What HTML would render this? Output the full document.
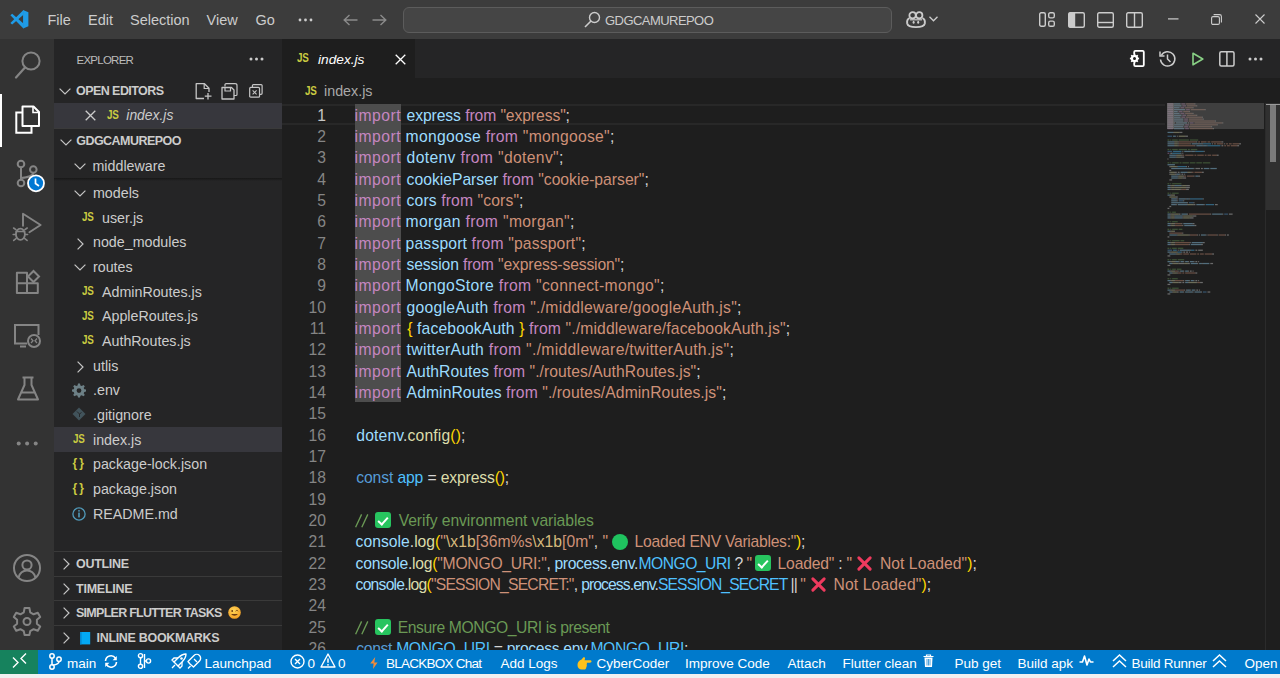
<!DOCTYPE html>
<html><head><meta charset="utf-8">
<style>
*{box-sizing:border-box;margin:0;padding:0}
html,body{width:1280px;height:678px;overflow:hidden;background:#1e1e1e;font-family:"Liberation Sans",sans-serif}
.a{position:absolute}
svg{position:absolute;overflow:visible}
#title{left:0;top:0;width:1280px;height:39px;background:#3c3c3c}
.menu{position:absolute;top:12px;font-size:14.5px;color:#cccccc;white-space:nowrap}
#act{left:0;top:39px;width:54px;height:611px;background:#333333}
#side{left:54px;top:39px;width:228px;height:611px;background:#252526}
#tabs{left:282px;top:39px;width:998px;height:39px;background:#252526}
#tab{left:282px;top:39px;width:133px;height:39px;background:#1e1e1e}
#status{left:0;top:649.5px;width:1280px;height:24.5px;background:#007acc}
#remote{left:0;top:649.5px;width:38px;height:24.5px;background:#16825d}
#taskbar{left:0;top:674px;width:1280px;height:4px;background:#f0f0f0}
.st{position:absolute;top:655.6px;font-size:13.5px;color:#ffffff;white-space:nowrap;line-height:16px}
.row{position:absolute;left:54px;width:228px;height:24.75px}
.tree{position:absolute;font-size:14.25px;color:#cccccc;white-space:nowrap;line-height:17px}
.hdr{position:absolute;font-size:12.5px;font-weight:bold;color:#cccccc;white-space:nowrap;line-height:14px}
.code{position:absolute;left:354.6px;font-size:15.7px;white-space:pre;line-height:21.333px;color:#d4d4d4}
.ln{position:absolute;left:290px;width:36px;text-align:right;font-size:15.7px;line-height:21.333px;color:#858585}
.js{position:absolute;font-size:12.5px;font-weight:bold;color:#cbcb41;line-height:12.5px;letter-spacing:-0.2px;white-space:nowrap;transform:scaleX(0.79);transform-origin:0 0}
.jb{position:absolute;font-size:12px;font-weight:bold;color:#cbcb41;line-height:12px;white-space:nowrap;letter-spacing:2.2px}
.ok{position:absolute;display:block;width:16px;height:16px;background:#27c45f;border-radius:3px}
.ok:after{content:"";position:absolute;left:5.5px;top:2.5px;width:4px;height:8px;border-right:2.2px solid #fff;border-bottom:2.2px solid #fff;transform:rotate(42deg)}
.gc{position:absolute;display:block;width:16px;height:16px;background:#1fc35f;border-radius:50%}
.rx{position:absolute;display:block;width:16px;height:16px}
.rx:before,.rx:after{content:"";position:absolute;left:6.5px;top:-1.5px;width:3px;height:19px;background:#ee3a5e;border-radius:1.5px;transform:rotate(45deg)}
.rx:after{transform:rotate(-45deg)}
.k{color:#c586c0}.v{color:#9cdcfe}.s{color:#ce9178}.f{color:#dcdcaa}.b{color:#ffd700}.c{color:#569cd6}.n{color:#4fc1ff}.cm{color:#6a9955}.e{color:#d7ba7d}
</style></head><body>
<div id="title" class="a"></div>

<!-- TITLE BAR -->
<svg style="left:9.8px;top:9.8px" width="18.4" height="18.4" viewBox="0 0 100 100"><g fill="#1f9ce8"><path d="M71 0 L100 12 V88 L71 100 Z"/><path d="M2 29 L12 21 L73 74 L73 100 Z"/><path d="M73 0 L73 26 L12 79 L2 71 Z"/></g></svg>
<div class="menu" style="left:47.5px">File</div>
<div class="menu" style="left:88px">Edit</div>
<div class="menu" style="left:130px">Selection</div>
<div class="menu" style="left:206.5px">View</div>
<div class="menu" style="left:255.5px">Go</div>
<svg style="left:298px;top:18px" width="16" height="4"><circle cx="2" cy="2" r="1.4" fill="#cccccc"/><circle cx="7.5" cy="2" r="1.4" fill="#cccccc"/><circle cx="13" cy="2" r="1.4" fill="#cccccc"/></svg>
<svg style="left:343px;top:14px" width="15" height="12" viewBox="0 0 15 12"><path d="M14.5 6 H1.5 M6.5 1 L1.2 6 L6.5 11" stroke="#8b8b8b" stroke-width="1.4" fill="none"/></svg>
<svg style="left:372px;top:14px" width="15" height="12" viewBox="0 0 15 12"><path d="M0.5 6 H13.5 M8.5 1 L13.8 6 L8.5 11" stroke="#8b8b8b" stroke-width="1.4" fill="none"/></svg>
<div class="a" style="left:403px;top:6.5px;width:489px;height:26.3px;background:#454545;border:1px solid #5c5c5c;border-radius:6px"></div>
<svg style="left:584px;top:11px" width="17" height="17" viewBox="0 0 17 17"><circle cx="10.5" cy="6.5" r="5" stroke="#cccccc" stroke-width="1.4" fill="none"/><path d="M7 10 L1 16" stroke="#cccccc" stroke-width="1.6"/></svg>
<div class="menu" style="left:605px;top:12.6px;font-size:13px;letter-spacing:-0.55px">GDGCAMUREPOO</div>
<svg style="left:906px;top:11px" width="20" height="17" viewBox="0 0 20 17"><circle cx="6.6" cy="4.3" r="3.2" stroke="#cccccc" stroke-width="1.8" fill="none"/><circle cx="13.2" cy="4.3" r="3.2" stroke="#cccccc" stroke-width="1.8" fill="none"/><path d="M3.6 7.2 C1.6 8 0.9 10.5 1.2 12.5 C1.8 15.3 5.5 16.1 10 16.1 C14.5 16.1 18.2 15.3 18.8 12.5 C19.1 10.5 18.4 8 16.4 7.2" stroke="#cccccc" stroke-width="1.9" fill="none"/><path d="M4 8.8 H16" stroke="#cccccc" stroke-width="1.2"/><ellipse cx="7.6" cy="11.3" rx="1" ry="1.5" fill="#cccccc"/><ellipse cx="12.2" cy="11.3" rx="1" ry="1.5" fill="#cccccc"/></svg>
<svg style="left:929px;top:16px" width="9" height="6" viewBox="0 0 9 6"><path d="M0.5 0.8 L4.5 4.8 L8.5 0.8" stroke="#cccccc" stroke-width="1.3" fill="none"/></svg>
<svg style="left:1039px;top:12px" width="16" height="15" viewBox="0 0 16 15"><rect x="0.7" y="0.7" width="5.6" height="13.6" rx="1.5" stroke="#cccccc" stroke-width="1.4" fill="none"/><rect x="9.7" y="0.7" width="5.6" height="5.2" rx="1.6" stroke="#cccccc" stroke-width="1.4" fill="none"/><rect x="9.7" y="9.1" width="5.6" height="5.2" rx="1.6" stroke="#cccccc" stroke-width="1.4" fill="none"/></svg>
<svg style="left:1067.5px;top:11.5px" width="17" height="16" viewBox="0 0 17 16"><rect x="0.7" y="0.7" width="15.6" height="14.6" rx="1.5" stroke="#cccccc" stroke-width="1.4" fill="none"/><rect x="0.7" y="0.7" width="6.5" height="14.6" fill="#cccccc"/></svg>
<svg style="left:1096.5px;top:11.5px" width="17" height="16" viewBox="0 0 17 16"><rect x="0.7" y="0.7" width="15.6" height="14.6" rx="1.5" stroke="#cccccc" stroke-width="1.4" fill="none"/><path d="M1 10.5 H16" stroke="#cccccc" stroke-width="1.4"/></svg>
<svg style="left:1125.5px;top:11.5px" width="17" height="16" viewBox="0 0 17 16"><rect x="0.7" y="0.7" width="15.6" height="14.6" rx="1.5" stroke="#cccccc" stroke-width="1.4" fill="none"/><path d="M8.5 1 V15" stroke="#cccccc" stroke-width="1.4"/></svg>
<svg style="left:1168px;top:17.5px" width="11" height="2"><rect x="0" y="0.3" width="10.5" height="1.2" fill="#cccccc"/></svg>
<svg style="left:1211px;top:14px" width="11" height="11" viewBox="0 0 11 11"><rect x="0.6" y="2.6" width="7.8" height="7.8" rx="1.4" stroke="#cccccc" stroke-width="1.1" fill="none"/><path d="M2.6 0.6 H8.5 C9.6 0.6 10.4 1.4 10.4 2.5 V8.4" stroke="#cccccc" stroke-width="1.1" fill="none"/></svg>
<svg style="left:1254.5px;top:14px" width="10" height="10" viewBox="0 0 10 10"><path d="M0.5 0.5 L9.5 9.5 M9.5 0.5 L0.5 9.5" stroke="#cccccc" stroke-width="1.1"/></svg>
<div id="act" class="a"></div>
<div id="side" class="a"></div>
<!-- ACTIVITY BAR -->
<svg style="left:14px;top:50px" width="28" height="30" viewBox="0 0 28 30"><circle cx="17" cy="11" r="8.6" stroke="#858585" stroke-width="2" fill="none"/><path d="M11 17.5 L2 27.5" stroke="#858585" stroke-width="2.2" stroke-linecap="round"/></svg>
<div class="a" style="left:0;top:93.5px;width:2px;height:53px;background:#ffffff"></div>
<svg style="left:14px;top:105px" width="28" height="30" viewBox="0 0 28 30"><path d="M8.5 7.5 H2.3 V27.8 H17.5 V21" stroke="#ffffff" stroke-width="2" fill="none"/><path d="M8.5 1.5 H19.5 L25 7 V21 H8.5 Z" stroke="#ffffff" stroke-width="2" fill="none" stroke-linejoin="round"/><path d="M19 1.5 V7.5 H25" stroke="#ffffff" stroke-width="1.6" fill="none"/></svg>
<svg style="left:14px;top:156px" width="34" height="36" viewBox="0 0 34 36"><circle cx="7" cy="8" r="3.3" stroke="#858585" stroke-width="2" fill="none"/><circle cx="19.3" cy="13.5" r="3.3" stroke="#858585" stroke-width="2" fill="none"/><circle cx="7" cy="27" r="3.3" stroke="#858585" stroke-width="2" fill="none"/><path d="M7 11.3 V23.7 M19.3 16.8 C19.3 20 15 21 7 22" stroke="#858585" stroke-width="2" fill="none"/><circle cx="22" cy="27.3" r="8" fill="#0078d4" stroke="#ffffff" stroke-width="1.8"/><path d="M21.5 22.5 V27.5 L25 30" stroke="#ffffff" stroke-width="1.7" fill="none"/></svg>
<svg style="left:8px;top:205px" width="40" height="40" viewBox="0 0 40 40"><path d="M15 20.8 V8.8 L32.6 20 L21.4 27.2" stroke="#858585" stroke-width="1.9" fill="none" stroke-linejoin="round" stroke-linecap="round"/><ellipse cx="12.4" cy="29.3" rx="4.5" ry="5.6" stroke="#858585" stroke-width="1.8" fill="none"/><path d="M8.2 26.5 H16.6 M7.9 24.6 L5.6 23 M7.7 29.5 H5.2 M8 33.6 L5.7 35.4 M16.9 24.6 L19.2 23 M17.1 29.5 H19.6 M16.8 33.6 L19.1 35.4" stroke="#858585" stroke-width="1.6" fill="none" stroke-linecap="round"/></svg>
<svg style="left:15px;top:268px" width="26" height="27" viewBox="0 0 26 27"><path d="M1.9 4.7 H12 V15.3 H22.8 V25.1 H1.9 Z M1.9 15.3 H12 V25.1" stroke="#858585" stroke-width="2" fill="none" stroke-linejoin="round"/><rect x="14.6" y="4.6" width="7.8" height="7.8" transform="rotate(45 18.5 8.5)" stroke="#858585" stroke-width="2" fill="none"/></svg>
<svg style="left:13px;top:323px" width="30" height="26" viewBox="0 0 30 26"><path d="M14 20.5 H2 V2 H25.5 V12" stroke="#858585" stroke-width="2" fill="none"/><path d="M7 23.5 H13" stroke="#858585" stroke-width="2"/><circle cx="21" cy="18" r="6" stroke="#858585" stroke-width="2" fill="none"/><path d="M18 15.5 L20 17.8 L18 20 M24 15.5 L22 17.8 L24 20" stroke="#858585" stroke-width="1.3" fill="none"/></svg>
<svg style="left:16px;top:376px" width="24" height="26" viewBox="0 0 24 26"><path d="M6.5 1.5 H17.5 M8.5 1.5 V9 L2 23.5 H22 L15.5 9 V1.5 M5 16.5 H19" stroke="#858585" stroke-width="2" fill="none" stroke-linejoin="round"/></svg>
<svg style="left:16px;top:441px" width="24" height="5"><circle cx="2.7" cy="2.5" r="2" fill="#858585"/><circle cx="11.1" cy="2.5" r="2" fill="#858585"/><circle cx="19.7" cy="2.5" r="2" fill="#858585"/></svg>
<svg style="left:12px;top:553px" width="30" height="30" viewBox="0 0 30 30"><circle cx="15" cy="15" r="13" stroke="#858585" stroke-width="2" fill="none"/><circle cx="15" cy="12" r="4.6" stroke="#858585" stroke-width="2" fill="none"/><path d="M6.5 24.5 C8 19.5 11 17.5 15 17.5 C19 17.5 22 19.5 23.5 24.5" stroke="#858585" stroke-width="2" fill="none"/></svg>
<svg style="left:12px;top:606px" width="30" height="30" viewBox="0 0 30 30"><path d="M12.6 2 H17.4 L18.2 6.3 L21.6 8.3 L25.8 6.8 L28.2 11 L24.9 13.8 V17.7 L28.2 20.5 L25.8 24.7 L21.6 23.2 L18.2 25.2 L17.4 29 H12.6 L11.8 25.2 L8.4 23.2 L4.2 24.7 L1.8 20.5 L5.1 17.7 V13.8 L1.8 11 L4.2 6.8 L8.4 8.3 L11.8 6.3 Z" stroke="#858585" stroke-width="2" fill="none" stroke-linejoin="round"/><circle cx="15" cy="15.5" r="3.5" stroke="#858585" stroke-width="2" fill="none"/></svg>


<!-- SIDEBAR -->
<div class="hdr" style="left:76.5px;top:52.8px;font-weight:normal;font-size:11.5px;letter-spacing:-0.75px;color:#bbbbbb">EXPLORER</div>
<svg style="left:249px;top:56.5px" width="16" height="4"><circle cx="2" cy="2" r="1.5" fill="#cccccc"/><circle cx="7.5" cy="2" r="1.5" fill="#cccccc"/><circle cx="13" cy="2" r="1.5" fill="#cccccc"/></svg>
<svg style="left:59px;top:88.2px" width="12" height="7" viewBox="0 0 12 7"><path d="M0.6 0.6 L6 6 L11.4 0.6" stroke="#c5c5c5" stroke-width="1.2" fill="none"/></svg>
<div class="hdr" style="left:76px;top:84.2px;letter-spacing:-0.56px">OPEN EDITORS</div>
<svg style="left:195px;top:82.5px" width="18" height="17" viewBox="0 0 18 17"><path d="M9 15.5 H1.2 V0.7 H9.5 L14 5.2 V9" stroke="#c5c5c5" stroke-width="1.3" fill="none" stroke-linejoin="round"/><path d="M9.2 0.7 V5.5 H14" stroke="#c5c5c5" stroke-width="1.2" fill="none"/><path d="M13 10 V16.5 M9.8 13.2 H16.5" stroke="#c5c5c5" stroke-width="1.3"/></svg>
<svg style="left:221px;top:82.5px" width="17" height="17" viewBox="0 0 17 17"><path d="M4 3.5 V1.5 C4 1 4.5 0.7 5 0.7 H14 C15 0.7 16 1.5 16 2.5 V11.5 C16 12 15.5 12.5 15 12.5 H13" stroke="#c5c5c5" stroke-width="1.2" fill="none"/><path d="M1 4.5 H10.5 L13 7 V16 H1 Z" stroke="#c5c5c5" stroke-width="1.3" fill="none" stroke-linejoin="round"/><path d="M4 4.5 V8 H9.5 V4.5" stroke="#c5c5c5" stroke-width="1.2" fill="none"/></svg>
<svg style="left:249.3px;top:83.8px" width="15" height="15" viewBox="0 0 16 16"><g transform="scale(0.92)"><path d="M4 3.5 V1.8 C4 1.2 4.5 0.7 5 0.7 H14 C14.6 0.7 15.2 1.2 15.2 1.8 V10.8 C15.2 11.4 14.7 12 14 12 H12.2" stroke="#c5c5c5" stroke-width="1.4" fill="none"/><rect x="0.8" y="4" width="11.4" height="11.3" rx="1.2" stroke="#c5c5c5" stroke-width="1.4" fill="none"/><path d="M4.2 7.5 L8.8 12.1 M8.8 7.5 L4.2 12.1" stroke="#c5c5c5" stroke-width="1.2"/></g></svg>
<div class="a" style="left:54px;top:102.7px;width:228px;height:25.4px;background:#37373d"></div>
<svg style="left:85px;top:109.9px" width="11" height="11" viewBox="0 0 11 11"><path d="M0.7 0.7 L10.3 10.3 M10.3 0.7 L0.7 10.3" stroke="#cccccc" stroke-width="1.3"/></svg>
<div class="js" style="left:106.7px;top:109.2px">JS</div>
<div class="tree" style="left:126.3px;top:106.90px;font-style:italic;color:#cccccc;font-size:13.9px">index.js</div>
<div class="a" style="left:54px;top:128px;width:228px;height:1px;background:#3a3a3a"></div>
<svg style="left:59.5px;top:138.5px" width="12" height="7" viewBox="0 0 12 7"><path d="M0.6 0.6 L6 6 L11.4 0.6" stroke="#c5c5c5" stroke-width="1.2" fill="none"/></svg>
<div class="hdr" style="left:76.3px;top:133.7px;letter-spacing:-0.55px">GDGCAMUREPOO</div>
<svg style="left:74px;top:163px" width="12" height="7" viewBox="0 0 12 7"><path d="M0.6 0.6 L6 6 L11.4 0.6" stroke="#c5c5c5" stroke-width="1.2" fill="none"/></svg>
<div class="tree" style="left:92.5px;top:158.10px;color:#cccccc">middleware</div>
<svg style="left:74px;top:190.3px" width="12" height="7" viewBox="0 0 12 7"><path d="M0.6 0.6 L6 6 L11.4 0.6" stroke="#c5c5c5" stroke-width="1.2" fill="none"/></svg>
<div class="tree" style="left:93px;top:185.10px;color:#cccccc">models</div>
<div class="js" style="left:81.5px;top:211.12px">JS</div>
<div class="tree" style="left:102px;top:209.75px;color:#cccccc">user.js</div>
<svg style="left:77px;top:237.60000000000002px" width="7" height="12" viewBox="0 0 7 12"><path d="M0.6 0.6 L6 6 L0.6 11.4" stroke="#c5c5c5" stroke-width="1.2" fill="none"/></svg>
<div class="tree" style="left:93px;top:234.40px;color:#cccccc">node_modules</div>
<svg style="left:74px;top:264.25px" width="12" height="7" viewBox="0 0 12 7"><path d="M0.6 0.6 L6 6 L11.4 0.6" stroke="#c5c5c5" stroke-width="1.2" fill="none"/></svg>
<div class="tree" style="left:93px;top:259.05px;color:#cccccc">routes</div>
<div class="js" style="left:81.5px;top:285.07px">JS</div>
<div class="tree" style="left:102px;top:283.70px;color:#cccccc">AdminRoutes.js</div>
<div class="js" style="left:81.5px;top:309.72px">JS</div>
<div class="tree" style="left:102px;top:308.35px;color:#cccccc">AppleRoutes.js</div>
<div class="js" style="left:81.5px;top:334.37px">JS</div>
<div class="tree" style="left:102px;top:333.00px;color:#cccccc">AuthRoutes.js</div>
<svg style="left:77px;top:360.85px" width="7" height="12" viewBox="0 0 7 12"><path d="M0.6 0.6 L6 6 L0.6 11.4" stroke="#c5c5c5" stroke-width="1.2" fill="none"/></svg>
<div class="tree" style="left:93px;top:357.65px;color:#cccccc">utlis</div>
<svg style="left:72px;top:382.50px" width="14" height="14" viewBox="0 0 14 14"><path fill="#6d8086" d="M6 0.5 H8 L8.4 2.4 L9.8 3 L11.4 1.9 L12.8 3.3 L11.7 4.9 L12.3 6.3 L14 6.6 V8.6 L12.3 8.9 L11.7 10.3 L12.8 11.9 L11.4 13.3 L9.8 12.2 L8.4 12.8 L8 14.5 H6 L5.6 12.8 L4.2 12.2 L2.6 13.3 L1.2 11.9 L2.3 10.3 L1.7 8.9 L0 8.6 V6.6 L1.7 6.3 L2.3 4.9 L1.2 3.3 L2.6 1.9 L4.2 3 L5.6 2.4 Z M7 5.2 A2.4 2.4 0 1 0 7 10 A2.4 2.4 0 1 0 7 5.2 Z"/></svg>
<div class="tree" style="left:93px;top:382.30px;color:#cccccc">.env</div>
<svg style="left:72px;top:407.15px" width="14" height="14" viewBox="0 0 14 14"><path fill="#41535b" d="M7 0.5 L13.5 7 L7 13.5 L0.5 7 Z"/><path d="M5 4.5 L7.5 7 V10 M7.5 7 L9.5 5.5" stroke="#252526" stroke-width="0.9" fill="none"/></svg>
<div class="tree" style="left:93px;top:406.95px;color:#cccccc">.gitignore</div>
<div class="a" style="left:54px;top:427.10px;width:228px;height:24.8px;background:#37373d"></div>
<div class="js" style="left:72.5px;top:432.97px">JS</div>
<div class="tree" style="left:93px;top:431.60px;color:#cccccc">index.js</div>
<div class="jb" style="left:72.5px;top:457.3px">{}</div>
<div class="tree" style="left:93px;top:456.25px;color:#cccccc">package-lock.json</div>
<div class="jb" style="left:72.5px;top:481.95px">{}</div>
<div class="tree" style="left:93px;top:480.90px;color:#cccccc">package.json</div>
<svg style="left:72px;top:506.75px" width="14" height="14" viewBox="0 0 14 14"><circle cx="7" cy="7" r="6.1" stroke="#519aba" stroke-width="1.3" fill="none"/><rect x="6.2" y="5.6" width="1.6" height="4.8" fill="#519aba"/><circle cx="7" cy="3.8" r="0.9" fill="#519aba"/></svg>
<div class="tree" style="left:93px;top:505.55px;color:#cccccc">README.md</div>
<div class="a" style="left:54px;top:551px;width:228px;height:1px;background:#3a3a3a"></div>
<svg style="left:62.5px;top:558px" width="7" height="12" viewBox="0 0 7 12"><path d="M0.6 0.6 L6 6 L0.6 11.4" stroke="#c5c5c5" stroke-width="1.2" fill="none"/></svg>
<div class="hdr" style="left:76px;top:557.1px;letter-spacing:-0.3px">OUTLINE</div>
<div class="a" style="left:54px;top:575.6px;width:228px;height:1px;background:#3a3a3a"></div>
<svg style="left:62.5px;top:582.6px" width="7" height="12" viewBox="0 0 7 12"><path d="M0.6 0.6 L6 6 L0.6 11.4" stroke="#c5c5c5" stroke-width="1.2" fill="none"/></svg>
<div class="hdr" style="left:76px;top:581.7px;letter-spacing:-0.24px">TIMELINE</div>
<div class="a" style="left:54px;top:600.3px;width:228px;height:1px;background:#3a3a3a"></div>
<svg style="left:62.5px;top:607.3px" width="7" height="12" viewBox="0 0 7 12"><path d="M0.6 0.6 L6 6 L0.6 11.4" stroke="#c5c5c5" stroke-width="1.2" fill="none"/></svg>
<div class="hdr" style="left:76px;top:606.4px;letter-spacing:-0.73px">SIMPLER FLUTTER TASKS</div>
<div class="a" style="left:54px;top:625px;width:228px;height:1px;background:#3a3a3a"></div>
<svg style="left:62.5px;top:632px" width="7" height="12" viewBox="0 0 7 12"><path d="M0.6 0.6 L6 6 L0.6 11.4" stroke="#c5c5c5" stroke-width="1.2" fill="none"/></svg>
<div class="hdr" style="left:96.5px;top:631px;letter-spacing:-0.31px">INLINE BOOKMARKS</div>
<div class="a" style="left:54px;top:177.5px;width:228px;height:3px;background:linear-gradient(#171717,rgba(23,23,23,0))"></div>
<svg style="left:228px;top:606px" width="13" height="13" viewBox="0 0 13 13"><defs><radialGradient id="wg" cx="0.45" cy="0.35" r="0.7"><stop offset="0" stop-color="#ffd75a"/><stop offset="1" stop-color="#f29a1e"/></radialGradient></defs><circle cx="6.5" cy="6.5" r="6.3" fill="url(#wg)"/><ellipse cx="4.2" cy="5" rx="0.9" ry="1.1" fill="#6b3b12"/><path d="M7.6 5.2 C8.3 4.2 9.5 4.2 10.2 5.2" stroke="#6b3b12" stroke-width="0.9" fill="none"/><path d="M3.2 8 C4.5 10.3 8.5 10.3 9.8 8 Z" fill="#6b3b12"/></svg>
<svg style="left:80px;top:631.8px" width="11" height="13" viewBox="0 0 11 13"><rect x="0" y="0" width="10.2" height="12.4" fill="#03a9f4"/><rect x="0" y="0" width="1.6" height="12.4" fill="#0288d1"/></svg>
<div id="tabs" class="a"></div>
<div id="tab" class="a"></div>

<!-- EDITOR -->
<div class="js" style="left:297.3px;top:51.9px">JS</div>
<div class="tree" style="left:318px;top:51.30px;font-style:italic;color:#ffffff;font-size:13.7px">index.js</div>
<svg style="left:394.5px;top:53.5px" width="11" height="11" viewBox="0 0 11 11"><path d="M0.7 0.7 L10.3 10.3 M10.3 0.7 L0.7 10.3" stroke="#ffffff" stroke-width="1.3"/></svg>
<svg style="left:1130px;top:50px" width="15" height="17" viewBox="0 0 15 17"><rect x="4.2" y="0.9" width="9.6" height="15.2" rx="1.2" stroke="#ffffff" stroke-width="1.8" fill="none"/><circle cx="4.5" cy="8.5" r="4.2" fill="#1e1e1e"/><path fill="#ffffff" d="M3.7 4.8 H5.3 L5.5 5.9 L6.4 6.3 L7.3 5.7 L8.3 6.7 L7.7 7.6 L8.1 8.5 L9.1 8.7 V10.3 L8.1 10.5 L7.7 11.4 L8.3 12.3 L7.3 13.3 L6.4 12.7 L5.5 13.1 L5.3 14.2 H3.7 L3.5 13.1 L2.6 12.7 L1.7 13.3 L0.7 12.3 L1.3 11.4 L0.9 10.5 L-0.1 10.3 V8.7 L0.9 8.5 L1.3 7.6 L0.7 6.7 L1.7 5.7 L2.6 6.3 L3.5 5.9 Z M4.5 8 A1.5 1.5 0 1 0 4.5 11 A1.5 1.5 0 1 0 4.5 8 Z" transform="translate(0,-1)"/></svg>
<svg style="left:1158.5px;top:50px" width="17" height="17" viewBox="0 0 17 17"><path d="M2.3 5.5 A7.2 7.2 0 1 1 1.5 9.5" stroke="#cccccc" stroke-width="1.5" fill="none"/><path d="M1 1.5 V6 H5.5" stroke="#cccccc" stroke-width="1.5" fill="none"/><path d="M8.5 4.5 V9 L11.5 12" stroke="#cccccc" stroke-width="1.5" fill="none"/></svg>
<svg style="left:1191.5px;top:52px" width="12" height="14" viewBox="0 0 12 14"><path d="M1 1.2 L10.8 7 L1 12.8 Z" stroke="#89d185" stroke-width="1.6" fill="none" stroke-linejoin="round"/></svg>
<svg style="left:1218.5px;top:50.5px" width="16" height="16" viewBox="0 0 16 16"><rect x="0.8" y="0.8" width="14.2" height="14.2" rx="1.5" stroke="#cccccc" stroke-width="1.5" fill="none"/><path d="M7.9 1 V15" stroke="#cccccc" stroke-width="1.5"/></svg>
<svg style="left:1247.5px;top:56.5px" width="16" height="4"><circle cx="2" cy="2" r="1.5" fill="#cccccc"/><circle cx="7.5" cy="2" r="1.5" fill="#cccccc"/><circle cx="13" cy="2" r="1.5" fill="#cccccc"/></svg>
<div class="js" style="left:304.6px;top:85px">JS</div>
<div class="tree" style="left:324px;top:83.00px;color:#a9a9a9;font-size:14.3px">index.js</div>
<div class="a" style="left:282px;top:103.5px;width:883px;height:21.4px;border-top:2px solid #282828;border-bottom:2px solid #282828"></div>
<div class="a" style="left:355px;top:103.5px;width:46.3px;height:298.3px;background:#4d4d4d"></div>
<div class="ln" style="top:104.600px;color:#c6c6c6">1</div>
<!--CODE-->
<div class="code" style="left:354.60px;top:104.600px;letter-spacing:0.475px"><span class="k">import</span></div>
<div class="code" style="left:406.60px;top:104.600px;letter-spacing:-0.095px"><span class="v">express</span> <span class="k">from</span> <span class="s">&quot;express&quot;</span>;</div>
<div class="code" style="left:354.60px;top:125.933px;letter-spacing:0.475px"><span class="k">import</span></div>
<div class="code" style="left:405.60px;top:125.933px;letter-spacing:0.273px"><span class="v">mongoose</span> <span class="k">from</span> <span class="s">&quot;mongoose&quot;</span>;</div>
<div class="code" style="left:354.60px;top:147.266px;letter-spacing:0.475px"><span class="k">import</span></div>
<div class="code" style="left:406.60px;top:147.266px;letter-spacing:0.348px"><span class="v">dotenv</span> <span class="k">from</span> <span class="s">&quot;dotenv&quot;</span>;</div>
<div class="code" style="left:354.60px;top:168.599px;letter-spacing:0.475px"><span class="k">import</span></div>
<div class="code" style="left:406.60px;top:168.599px;letter-spacing:-0.001px"><span class="v">cookieParser</span> <span class="k">from</span> <span class="s">&quot;cookie-parser&quot;</span>;</div>
<div class="code" style="left:354.60px;top:189.932px;letter-spacing:0.475px"><span class="k">import</span></div>
<div class="code" style="left:406.60px;top:189.932px;letter-spacing:0.125px"><span class="v">cors</span> <span class="k">from</span> <span class="s">&quot;cors&quot;</span>;</div>
<div class="code" style="left:354.60px;top:211.265px;letter-spacing:0.475px"><span class="k">import</span></div>
<div class="code" style="left:405.60px;top:211.265px;letter-spacing:0.339px"><span class="v">morgan</span> <span class="k">from</span> <span class="s">&quot;morgan&quot;</span>;</div>
<div class="code" style="left:354.60px;top:232.598px;letter-spacing:0.475px"><span class="k">import</span></div>
<div class="code" style="left:405.60px;top:232.598px;letter-spacing:0.164px"><span class="v">passport</span> <span class="k">from</span> <span class="s">&quot;passport&quot;</span>;</div>
<div class="code" style="left:354.60px;top:253.931px;letter-spacing:0.475px"><span class="k">import</span></div>
<div class="code" style="left:406.60px;top:253.931px;letter-spacing:-0.145px"><span class="v">session</span> <span class="k">from</span> <span class="s">&quot;express-session&quot;</span>;</div>
<div class="code" style="left:354.60px;top:275.264px;letter-spacing:0.475px"><span class="k">import</span></div>
<div class="code" style="left:405.60px;top:275.264px;letter-spacing:0.306px"><span class="v">MongoStore</span> <span class="k">from</span> <span class="s">&quot;connect-mongo&quot;</span>;</div>
<div class="code" style="left:354.60px;top:296.597px;letter-spacing:0.475px"><span class="k">import</span></div>
<div class="code" style="left:406.60px;top:296.597px;letter-spacing:0.260px"><span class="v">googleAuth</span> <span class="k">from</span> <span class="s">&quot;./middleware/googleAuth.js&quot;</span>;</div>
<div class="code" style="left:354.60px;top:317.930px;letter-spacing:0.475px"><span class="k">import</span></div>
<div class="code" style="left:407.20px;top:317.930px;letter-spacing:0.137px"><span class="b">{</span> <span class="v">facebookAuth</span> <span class="b">}</span> <span class="k">from</span> <span class="s">&quot;./middleware/facebookAuth.js&quot;</span>;</div>
<div class="code" style="left:354.60px;top:339.263px;letter-spacing:0.475px"><span class="k">import</span></div>
<div class="code" style="left:406.60px;top:339.263px;letter-spacing:0.312px"><span class="v">twitterAuth</span> <span class="k">from</span> <span class="s">&quot;./middleware/twitterAuth.js&quot;</span>;</div>
<div class="code" style="left:354.60px;top:360.596px;letter-spacing:0.475px"><span class="k">import</span></div>
<div class="code" style="left:406.60px;top:360.596px;letter-spacing:0.051px"><span class="v">AuthRoutes</span> <span class="k">from</span> <span class="s">&quot;./routes/AuthRoutes.js&quot;</span>;</div>
<div class="code" style="left:354.60px;top:381.929px;letter-spacing:0.475px"><span class="k">import</span></div>
<div class="code" style="left:406.60px;top:381.929px;letter-spacing:0.080px"><span class="v">AdminRoutes</span> <span class="k">from</span> <span class="s">&quot;./routes/AdminRoutes.js&quot;</span>;</div>
<div class="code" style="left:356.30px;top:424.595px;letter-spacing:0.140px"><span class="v">dotenv</span>.<span class="f">config</span><span class="b">()</span>;</div>
<div class="code" style="left:356.30px;top:467.261px;letter-spacing:-0.133px"><span class="c">const</span> <span class="n">app</span> = <span class="f">express</span><span class="b">()</span>;</div>
<svg style="left:354px;top:513.43px" width="16" height="15" viewBox="0 0 16 15"><path d="M1.6 14.2 L7.6 1.4 M7.8 14.2 L13.8 1.4" stroke="#6a9955" stroke-width="1.35" fill="none"/></svg>
<i class="ok" style="left:374.8px;top:512.43px"></i>
<div class="code" style="left:398.70px;top:509.927px;letter-spacing:-0.071px"><span class="cm">Verify environment variables</span></div>
<div class="code" style="left:355.60px;top:531.260px;letter-spacing:0.010px"><span class="v">console</span>.<span class="f">log</span><span class="b">(</span><span class="s">&quot;</span><span class="e">\x1b</span><span class="s">[36m%s</span><span class="e">\x1b</span><span class="s">[0m&quot;</span>, <span class="s">&quot;</span></div>
<i class="gc" style="left:612.2px;top:533.76px"></i>
<div class="code" style="left:634.60px;top:531.260px;letter-spacing:-0.274px"><span class="s">Loaded ENV Variables:&quot;</span><span class="b">)</span>;</div>
<div class="code" style="left:355.60px;top:552.593px;letter-spacing:-0.247px"><span class="v">console</span>.<span class="f">log</span><span class="b">(</span><span class="s">&quot;MONGO_URI:&quot;</span>,</div>
<div class="code" style="left:554.40px;top:552.593px;letter-spacing:-0.347px"><span class="v">process</span>.<span class="v">env</span>.</div>
<div class="code" style="left:638.40px;top:552.593px;letter-spacing:-0.507px"><span class="n">MONGO_URI</span> ? <span class="s">&quot;</span></div>
<i class="ok" style="left:754.7px;top:555.09px"></i>
<div class="code" style="left:777.60px;top:552.593px;letter-spacing:-0.209px"><span class="s">Loaded&quot;</span> : <span class="s">&quot;</span></div>
<i class="rx" style="left:856.8px;top:555.09px"></i>
<div class="code" style="left:879.90px;top:552.593px;letter-spacing:0.049px"><span class="s">Not Loaded&quot;</span><span class="b">)</span>;</div>
<div class="code" style="left:355.60px;top:573.926px;letter-spacing:-0.774px"><span class="v">console</span>.<span class="f">log</span><span class="b">(</span><span class="s">&quot;SESSION_SECRET:&quot;</span>,</div>
<div class="code" style="left:581.20px;top:573.926px;letter-spacing:-0.915px"><span class="v">process</span>.<span class="v">env</span>.<span class="n">SESSION_SECRET</span> || <span class="s">&quot;</span></div>
<i class="rx" style="left:810.9px;top:576.43px"></i>
<div class="code" style="left:833.50px;top:573.926px;letter-spacing:0.116px"><span class="s">Not Loaded&quot;</span><span class="b">)</span>;</div>
<svg style="left:354px;top:620.09px" width="16" height="15" viewBox="0 0 16 15"><path d="M1.6 14.2 L7.6 1.4 M7.8 14.2 L13.8 1.4" stroke="#6a9955" stroke-width="1.35" fill="none"/></svg>
<i class="ok" style="left:374.8px;top:619.09px"></i>
<div class="code" style="left:397.70px;top:616.592px;letter-spacing:-0.420px"><span class="cm">Ensure MONGO_URI is present</span></div>
<div class="code" style="left:356.30px;top:637.925px;letter-spacing:-0.341px"><span class="c">const</span> <span class="n">MONGO_URI</span> = <span class="v">process</span>.<span class="v">env</span>.<span class="n">MONGO_URI</span>;</div>
<!--/CODE-->
<div class="ln" style="top:125.933px;color:#858585">2</div>
<div class="ln" style="top:147.266px;color:#858585">3</div>
<div class="ln" style="top:168.599px;color:#858585">4</div>
<div class="ln" style="top:189.932px;color:#858585">5</div>
<div class="ln" style="top:211.265px;color:#858585">6</div>
<div class="ln" style="top:232.598px;color:#858585">7</div>
<div class="ln" style="top:253.931px;color:#858585">8</div>
<div class="ln" style="top:275.264px;color:#858585">9</div>
<div class="ln" style="top:296.597px;color:#858585">10</div>
<div class="ln" style="top:317.930px;color:#858585">11</div>
<div class="ln" style="top:339.263px;color:#858585">12</div>
<div class="ln" style="top:360.596px;color:#858585">13</div>
<div class="ln" style="top:381.929px;color:#858585">14</div>
<div class="ln" style="top:403.262px;color:#858585">15</div>
<div class="ln" style="top:424.595px;color:#858585">16</div>
<div class="ln" style="top:445.928px;color:#858585">17</div>
<div class="ln" style="top:467.261px;color:#858585">18</div>
<div class="ln" style="top:488.594px;color:#858585">19</div>
<div class="ln" style="top:509.927px;color:#858585">20</div>
<div class="ln" style="top:531.260px;color:#858585">21</div>
<div class="ln" style="top:552.593px;color:#858585">22</div>
<div class="ln" style="top:573.926px;color:#858585">23</div>
<div class="ln" style="top:595.259px;color:#858585">24</div>
<div class="ln" style="top:616.592px;color:#858585">25</div>
<div class="ln" style="top:637.925px;color:#858585">26</div>

<!-- MINIMAP -->
<!--MINI--><svg style="left:0;top:0" width="1280" height="678"><rect x="1167.50" y="103.30" width="5.58" height="1.25" fill="#c586c0" fill-opacity="0.42"/><rect x="1174.01" y="103.30" width="6.51" height="1.25" fill="#9cdcfe" fill-opacity="0.42"/><rect x="1181.45" y="103.30" width="3.72" height="1.25" fill="#c586c0" fill-opacity="0.42"/><rect x="1186.10" y="103.30" width="8.37" height="1.25" fill="#ce9178" fill-opacity="0.42"/><rect x="1194.47" y="103.30" width="0.93" height="1.25" fill="#d4d4d4" fill-opacity="0.42"/><rect x="1167.50" y="105.20" width="5.58" height="1.25" fill="#c586c0" fill-opacity="0.42"/><rect x="1174.01" y="105.20" width="7.44" height="1.25" fill="#9cdcfe" fill-opacity="0.42"/><rect x="1182.38" y="105.20" width="3.72" height="1.25" fill="#c586c0" fill-opacity="0.42"/><rect x="1187.03" y="105.20" width="9.30" height="1.25" fill="#ce9178" fill-opacity="0.42"/><rect x="1196.33" y="105.20" width="0.93" height="1.25" fill="#d4d4d4" fill-opacity="0.42"/><rect x="1167.50" y="107.10" width="5.58" height="1.25" fill="#c586c0" fill-opacity="0.42"/><rect x="1174.01" y="107.10" width="5.58" height="1.25" fill="#9cdcfe" fill-opacity="0.42"/><rect x="1180.52" y="107.10" width="3.72" height="1.25" fill="#c586c0" fill-opacity="0.42"/><rect x="1185.17" y="107.10" width="7.44" height="1.25" fill="#ce9178" fill-opacity="0.42"/><rect x="1192.61" y="107.10" width="0.93" height="1.25" fill="#d4d4d4" fill-opacity="0.42"/><rect x="1167.50" y="109.00" width="5.58" height="1.25" fill="#c586c0" fill-opacity="0.42"/><rect x="1174.01" y="109.00" width="11.16" height="1.25" fill="#9cdcfe" fill-opacity="0.42"/><rect x="1186.10" y="109.00" width="3.72" height="1.25" fill="#c586c0" fill-opacity="0.42"/><rect x="1190.75" y="109.00" width="13.95" height="1.25" fill="#ce9178" fill-opacity="0.42"/><rect x="1204.70" y="109.00" width="0.93" height="1.25" fill="#d4d4d4" fill-opacity="0.42"/><rect x="1167.50" y="110.90" width="5.58" height="1.25" fill="#c586c0" fill-opacity="0.42"/><rect x="1174.01" y="110.90" width="3.72" height="1.25" fill="#9cdcfe" fill-opacity="0.42"/><rect x="1178.66" y="110.90" width="3.72" height="1.25" fill="#c586c0" fill-opacity="0.42"/><rect x="1183.31" y="110.90" width="5.58" height="1.25" fill="#ce9178" fill-opacity="0.42"/><rect x="1188.89" y="110.90" width="0.93" height="1.25" fill="#d4d4d4" fill-opacity="0.42"/><rect x="1167.50" y="112.80" width="5.58" height="1.25" fill="#c586c0" fill-opacity="0.42"/><rect x="1174.01" y="112.80" width="5.58" height="1.25" fill="#9cdcfe" fill-opacity="0.42"/><rect x="1180.52" y="112.80" width="3.72" height="1.25" fill="#c586c0" fill-opacity="0.42"/><rect x="1185.17" y="112.80" width="7.44" height="1.25" fill="#ce9178" fill-opacity="0.42"/><rect x="1192.61" y="112.80" width="0.93" height="1.25" fill="#d4d4d4" fill-opacity="0.42"/><rect x="1167.50" y="114.70" width="5.58" height="1.25" fill="#c586c0" fill-opacity="0.42"/><rect x="1174.01" y="114.70" width="7.44" height="1.25" fill="#9cdcfe" fill-opacity="0.42"/><rect x="1182.38" y="114.70" width="3.72" height="1.25" fill="#c586c0" fill-opacity="0.42"/><rect x="1187.03" y="114.70" width="9.30" height="1.25" fill="#ce9178" fill-opacity="0.42"/><rect x="1196.33" y="114.70" width="0.93" height="1.25" fill="#d4d4d4" fill-opacity="0.42"/><rect x="1167.50" y="116.60" width="5.58" height="1.25" fill="#c586c0" fill-opacity="0.42"/><rect x="1174.01" y="116.60" width="6.51" height="1.25" fill="#9cdcfe" fill-opacity="0.42"/><rect x="1181.45" y="116.60" width="3.72" height="1.25" fill="#c586c0" fill-opacity="0.42"/><rect x="1186.10" y="116.60" width="15.81" height="1.25" fill="#ce9178" fill-opacity="0.42"/><rect x="1201.91" y="116.60" width="0.93" height="1.25" fill="#d4d4d4" fill-opacity="0.42"/><rect x="1167.50" y="118.50" width="5.58" height="1.25" fill="#c586c0" fill-opacity="0.42"/><rect x="1174.01" y="118.50" width="9.30" height="1.25" fill="#9cdcfe" fill-opacity="0.42"/><rect x="1184.24" y="118.50" width="3.72" height="1.25" fill="#c586c0" fill-opacity="0.42"/><rect x="1188.89" y="118.50" width="13.95" height="1.25" fill="#ce9178" fill-opacity="0.42"/><rect x="1202.84" y="118.50" width="0.93" height="1.25" fill="#d4d4d4" fill-opacity="0.42"/><rect x="1167.50" y="120.40" width="5.58" height="1.25" fill="#c586c0" fill-opacity="0.42"/><rect x="1174.01" y="120.40" width="9.30" height="1.25" fill="#9cdcfe" fill-opacity="0.42"/><rect x="1184.24" y="120.40" width="3.72" height="1.25" fill="#c586c0" fill-opacity="0.42"/><rect x="1188.89" y="120.40" width="26.04" height="1.25" fill="#ce9178" fill-opacity="0.42"/><rect x="1214.93" y="120.40" width="0.93" height="1.25" fill="#d4d4d4" fill-opacity="0.42"/><rect x="1167.50" y="122.30" width="5.58" height="1.25" fill="#c586c0" fill-opacity="0.42"/><rect x="1174.01" y="122.30" width="0.93" height="1.25" fill="#d4d4d4" fill-opacity="0.42"/><rect x="1175.87" y="122.30" width="11.16" height="1.25" fill="#9cdcfe" fill-opacity="0.42"/><rect x="1187.96" y="122.30" width="0.93" height="1.25" fill="#d4d4d4" fill-opacity="0.42"/><rect x="1189.82" y="122.30" width="3.72" height="1.25" fill="#c586c0" fill-opacity="0.42"/><rect x="1194.47" y="122.30" width="27.90" height="1.25" fill="#ce9178" fill-opacity="0.42"/><rect x="1222.37" y="122.30" width="0.93" height="1.25" fill="#d4d4d4" fill-opacity="0.42"/><rect x="1167.50" y="124.20" width="5.58" height="1.25" fill="#c586c0" fill-opacity="0.42"/><rect x="1174.01" y="124.20" width="10.23" height="1.25" fill="#9cdcfe" fill-opacity="0.42"/><rect x="1185.17" y="124.20" width="3.72" height="1.25" fill="#c586c0" fill-opacity="0.42"/><rect x="1189.82" y="124.20" width="26.97" height="1.25" fill="#ce9178" fill-opacity="0.42"/><rect x="1216.79" y="124.20" width="0.93" height="1.25" fill="#d4d4d4" fill-opacity="0.42"/><rect x="1167.50" y="126.10" width="5.58" height="1.25" fill="#c586c0" fill-opacity="0.42"/><rect x="1174.01" y="126.10" width="9.30" height="1.25" fill="#9cdcfe" fill-opacity="0.42"/><rect x="1184.24" y="126.10" width="3.72" height="1.25" fill="#c586c0" fill-opacity="0.42"/><rect x="1188.89" y="126.10" width="22.32" height="1.25" fill="#ce9178" fill-opacity="0.42"/><rect x="1211.21" y="126.10" width="0.93" height="1.25" fill="#d4d4d4" fill-opacity="0.42"/><rect x="1167.50" y="128.00" width="5.58" height="1.25" fill="#c586c0" fill-opacity="0.42"/><rect x="1174.01" y="128.00" width="10.23" height="1.25" fill="#9cdcfe" fill-opacity="0.42"/><rect x="1185.17" y="128.00" width="3.72" height="1.25" fill="#c586c0" fill-opacity="0.42"/><rect x="1189.82" y="128.00" width="23.25" height="1.25" fill="#ce9178" fill-opacity="0.42"/><rect x="1213.07" y="128.00" width="0.93" height="1.25" fill="#d4d4d4" fill-opacity="0.42"/><rect x="1167.50" y="131.80" width="5.58" height="1.25" fill="#9cdcfe" fill-opacity="0.42"/><rect x="1173.08" y="131.80" width="0.93" height="1.25" fill="#d4d4d4" fill-opacity="0.42"/><rect x="1174.01" y="131.80" width="5.58" height="1.25" fill="#dcdcaa" fill-opacity="0.42"/><rect x="1179.59" y="131.80" width="2.79" height="1.25" fill="#d4d4d4" fill-opacity="0.42"/><rect x="1167.50" y="135.60" width="4.65" height="1.25" fill="#569cd6" fill-opacity="0.42"/><rect x="1173.08" y="135.60" width="2.79" height="1.25" fill="#9cdcfe" fill-opacity="0.42"/><rect x="1176.80" y="135.60" width="0.93" height="1.25" fill="#d4d4d4" fill-opacity="0.42"/><rect x="1178.66" y="135.60" width="6.51" height="1.25" fill="#dcdcaa" fill-opacity="0.42"/><rect x="1185.17" y="135.60" width="2.79" height="1.25" fill="#d4d4d4" fill-opacity="0.42"/><rect x="1167.50" y="139.40" width="1.86" height="1.25" fill="#6a9955" fill-opacity="0.42"/><rect x="1170.29" y="139.40" width="0.93" height="1.25" fill="#6a9955" fill-opacity="0.42"/><rect x="1172.15" y="139.40" width="5.58" height="1.25" fill="#6a9955" fill-opacity="0.42"/><rect x="1178.66" y="139.40" width="10.23" height="1.25" fill="#6a9955" fill-opacity="0.42"/><rect x="1189.82" y="139.40" width="8.37" height="1.25" fill="#6a9955" fill-opacity="0.42"/><rect x="1167.50" y="141.30" width="6.51" height="1.25" fill="#9cdcfe" fill-opacity="0.42"/><rect x="1174.01" y="141.30" width="0.93" height="1.25" fill="#d4d4d4" fill-opacity="0.42"/><rect x="1174.94" y="141.30" width="2.79" height="1.25" fill="#dcdcaa" fill-opacity="0.42"/><rect x="1177.73" y="141.30" width="0.93" height="1.25" fill="#d4d4d4" fill-opacity="0.42"/><rect x="1178.66" y="141.30" width="17.67" height="1.25" fill="#ce9178" fill-opacity="0.42"/><rect x="1196.33" y="141.30" width="0.93" height="1.25" fill="#d4d4d4" fill-opacity="0.42"/><rect x="1198.19" y="141.30" width="1.86" height="1.25" fill="#ce9178" fill-opacity="0.42"/><rect x="1200.98" y="141.30" width="5.58" height="1.25" fill="#ce9178" fill-opacity="0.42"/><rect x="1207.49" y="141.30" width="2.79" height="1.25" fill="#ce9178" fill-opacity="0.42"/><rect x="1211.21" y="141.30" width="10.23" height="1.25" fill="#ce9178" fill-opacity="0.42"/><rect x="1221.44" y="141.30" width="1.86" height="1.25" fill="#d4d4d4" fill-opacity="0.42"/><rect x="1167.50" y="143.20" width="6.51" height="1.25" fill="#9cdcfe" fill-opacity="0.42"/><rect x="1174.01" y="143.20" width="0.93" height="1.25" fill="#d4d4d4" fill-opacity="0.42"/><rect x="1174.94" y="143.20" width="2.79" height="1.25" fill="#dcdcaa" fill-opacity="0.42"/><rect x="1177.73" y="143.20" width="0.93" height="1.25" fill="#d4d4d4" fill-opacity="0.42"/><rect x="1178.66" y="143.20" width="11.16" height="1.25" fill="#ce9178" fill-opacity="0.42"/><rect x="1189.82" y="143.20" width="0.93" height="1.25" fill="#d4d4d4" fill-opacity="0.42"/><rect x="1191.68" y="143.20" width="6.51" height="1.25" fill="#9cdcfe" fill-opacity="0.42"/><rect x="1198.19" y="143.20" width="0.93" height="1.25" fill="#d4d4d4" fill-opacity="0.42"/><rect x="1199.12" y="143.20" width="2.79" height="1.25" fill="#9cdcfe" fill-opacity="0.42"/><rect x="1201.91" y="143.20" width="0.93" height="1.25" fill="#d4d4d4" fill-opacity="0.42"/><rect x="1202.84" y="143.20" width="8.37" height="1.25" fill="#4fc1ff" fill-opacity="0.42"/><rect x="1212.14" y="143.20" width="0.93" height="1.25" fill="#d4d4d4" fill-opacity="0.42"/><rect x="1214.00" y="143.20" width="1.86" height="1.25" fill="#ce9178" fill-opacity="0.42"/><rect x="1216.79" y="143.20" width="6.51" height="1.25" fill="#ce9178" fill-opacity="0.42"/><rect x="1224.23" y="143.20" width="0.93" height="1.25" fill="#d4d4d4" fill-opacity="0.42"/><rect x="1226.09" y="143.20" width="1.86" height="1.25" fill="#ce9178" fill-opacity="0.42"/><rect x="1228.88" y="143.20" width="2.79" height="1.25" fill="#ce9178" fill-opacity="0.42"/><rect x="1232.60" y="143.20" width="6.51" height="1.25" fill="#ce9178" fill-opacity="0.42"/><rect x="1239.11" y="143.20" width="1.86" height="1.25" fill="#d4d4d4" fill-opacity="0.42"/><rect x="1167.50" y="145.10" width="6.51" height="1.25" fill="#9cdcfe" fill-opacity="0.42"/><rect x="1174.01" y="145.10" width="0.93" height="1.25" fill="#d4d4d4" fill-opacity="0.42"/><rect x="1174.94" y="145.10" width="2.79" height="1.25" fill="#dcdcaa" fill-opacity="0.42"/><rect x="1177.73" y="145.10" width="0.93" height="1.25" fill="#d4d4d4" fill-opacity="0.42"/><rect x="1178.66" y="145.10" width="15.81" height="1.25" fill="#ce9178" fill-opacity="0.42"/><rect x="1194.47" y="145.10" width="0.93" height="1.25" fill="#d4d4d4" fill-opacity="0.42"/><rect x="1196.33" y="145.10" width="6.51" height="1.25" fill="#9cdcfe" fill-opacity="0.42"/><rect x="1202.84" y="145.10" width="0.93" height="1.25" fill="#d4d4d4" fill-opacity="0.42"/><rect x="1203.77" y="145.10" width="2.79" height="1.25" fill="#9cdcfe" fill-opacity="0.42"/><rect x="1206.56" y="145.10" width="0.93" height="1.25" fill="#d4d4d4" fill-opacity="0.42"/><rect x="1207.49" y="145.10" width="13.02" height="1.25" fill="#4fc1ff" fill-opacity="0.42"/><rect x="1221.44" y="145.10" width="1.86" height="1.25" fill="#d4d4d4" fill-opacity="0.42"/><rect x="1224.23" y="145.10" width="1.86" height="1.25" fill="#ce9178" fill-opacity="0.42"/><rect x="1227.02" y="145.10" width="2.79" height="1.25" fill="#ce9178" fill-opacity="0.42"/><rect x="1230.74" y="145.10" width="6.51" height="1.25" fill="#ce9178" fill-opacity="0.42"/><rect x="1237.25" y="145.10" width="1.86" height="1.25" fill="#d4d4d4" fill-opacity="0.42"/><rect x="1167.50" y="148.90" width="1.86" height="1.25" fill="#6a9955" fill-opacity="0.42"/><rect x="1170.29" y="148.90" width="0.93" height="1.25" fill="#6a9955" fill-opacity="0.42"/><rect x="1172.15" y="148.90" width="5.58" height="1.25" fill="#6a9955" fill-opacity="0.42"/><rect x="1178.66" y="148.90" width="8.37" height="1.25" fill="#6a9955" fill-opacity="0.42"/><rect x="1187.96" y="148.90" width="1.86" height="1.25" fill="#6a9955" fill-opacity="0.42"/><rect x="1190.75" y="148.90" width="6.51" height="1.25" fill="#6a9955" fill-opacity="0.42"/><rect x="1167.50" y="150.80" width="4.65" height="1.25" fill="#569cd6" fill-opacity="0.42"/><rect x="1173.08" y="150.80" width="8.37" height="1.25" fill="#4fc1ff" fill-opacity="0.42"/><rect x="1182.38" y="150.80" width="0.93" height="1.25" fill="#d4d4d4" fill-opacity="0.42"/><rect x="1184.24" y="150.80" width="6.51" height="1.25" fill="#9cdcfe" fill-opacity="0.42"/><rect x="1190.75" y="150.80" width="0.93" height="1.25" fill="#d4d4d4" fill-opacity="0.42"/><rect x="1191.68" y="150.80" width="2.79" height="1.25" fill="#9cdcfe" fill-opacity="0.42"/><rect x="1194.47" y="150.80" width="0.93" height="1.25" fill="#d4d4d4" fill-opacity="0.42"/><rect x="1195.40" y="150.80" width="8.37" height="1.25" fill="#4fc1ff" fill-opacity="0.42"/><rect x="1203.77" y="150.80" width="0.93" height="1.25" fill="#d4d4d4" fill-opacity="0.42"/><rect x="1167.50" y="152.70" width="1.86" height="1.25" fill="#c586c0" fill-opacity="0.42"/><rect x="1170.29" y="152.70" width="1.86" height="1.25" fill="#d4d4d4" fill-opacity="0.42"/><rect x="1172.15" y="152.70" width="8.37" height="1.25" fill="#4fc1ff" fill-opacity="0.42"/><rect x="1180.52" y="152.70" width="0.93" height="1.25" fill="#d4d4d4" fill-opacity="0.42"/><rect x="1182.38" y="152.70" width="0.93" height="1.25" fill="#d4d4d4" fill-opacity="0.42"/><rect x="1169.36" y="154.60" width="6.51" height="1.25" fill="#9cdcfe" fill-opacity="0.42"/><rect x="1175.87" y="154.60" width="0.93" height="1.25" fill="#d4d4d4" fill-opacity="0.42"/><rect x="1176.80" y="154.60" width="4.65" height="1.25" fill="#dcdcaa" fill-opacity="0.42"/><rect x="1181.45" y="154.60" width="0.93" height="1.25" fill="#d4d4d4" fill-opacity="0.42"/><rect x="1182.38" y="154.60" width="1.86" height="1.25" fill="#ce9178" fill-opacity="0.42"/><rect x="1185.17" y="154.60" width="8.37" height="1.25" fill="#ce9178" fill-opacity="0.42"/><rect x="1194.47" y="154.60" width="1.86" height="1.25" fill="#ce9178" fill-opacity="0.42"/><rect x="1197.26" y="154.60" width="6.51" height="1.25" fill="#ce9178" fill-opacity="0.42"/><rect x="1204.70" y="154.60" width="1.86" height="1.25" fill="#ce9178" fill-opacity="0.42"/><rect x="1207.49" y="154.60" width="3.72" height="1.25" fill="#ce9178" fill-opacity="0.42"/><rect x="1212.14" y="154.60" width="4.65" height="1.25" fill="#ce9178" fill-opacity="0.42"/><rect x="1216.79" y="154.60" width="1.86" height="1.25" fill="#d4d4d4" fill-opacity="0.42"/><rect x="1169.36" y="156.50" width="6.51" height="1.25" fill="#9cdcfe" fill-opacity="0.42"/><rect x="1175.87" y="156.50" width="0.93" height="1.25" fill="#d4d4d4" fill-opacity="0.42"/><rect x="1176.80" y="156.50" width="3.72" height="1.25" fill="#dcdcaa" fill-opacity="0.42"/><rect x="1180.52" y="156.50" width="3.72" height="1.25" fill="#d4d4d4" fill-opacity="0.42"/><rect x="1167.50" y="158.40" width="0.93" height="1.25" fill="#d4d4d4" fill-opacity="0.42"/><rect x="1167.50" y="162.20" width="1.86" height="1.25" fill="#6a9955" fill-opacity="0.42"/><rect x="1170.29" y="162.20" width="0.93" height="1.25" fill="#6a9955" fill-opacity="0.42"/><rect x="1172.15" y="162.20" width="6.51" height="1.25" fill="#6a9955" fill-opacity="0.42"/><rect x="1179.59" y="162.20" width="1.86" height="1.25" fill="#6a9955" fill-opacity="0.42"/><rect x="1182.38" y="162.20" width="6.51" height="1.25" fill="#6a9955" fill-opacity="0.42"/><rect x="1189.82" y="162.20" width="5.58" height="1.25" fill="#6a9955" fill-opacity="0.42"/><rect x="1196.33" y="162.20" width="5.58" height="1.25" fill="#6a9955" fill-opacity="0.42"/><rect x="1202.84" y="162.20" width="7.44" height="1.25" fill="#6a9955" fill-opacity="0.42"/><rect x="1167.50" y="164.10" width="7.44" height="1.25" fill="#9cdcfe" fill-opacity="0.42"/><rect x="1169.36" y="166.00" width="0.93" height="1.25" fill="#d4d4d4" fill-opacity="0.42"/><rect x="1170.29" y="166.00" width="6.51" height="1.25" fill="#dcdcaa" fill-opacity="0.42"/><rect x="1176.80" y="166.00" width="0.93" height="1.25" fill="#d4d4d4" fill-opacity="0.42"/><rect x="1177.73" y="166.00" width="8.37" height="1.25" fill="#4fc1ff" fill-opacity="0.42"/><rect x="1186.10" y="166.00" width="0.93" height="1.25" fill="#d4d4d4" fill-opacity="0.42"/><rect x="1187.96" y="166.00" width="0.93" height="1.25" fill="#d4d4d4" fill-opacity="0.42"/><rect x="1171.22" y="167.90" width="22.32" height="1.25" fill="#9cdcfe" fill-opacity="0.42"/><rect x="1193.54" y="167.90" width="0.93" height="1.25" fill="#d4d4d4" fill-opacity="0.42"/><rect x="1195.40" y="167.90" width="4.65" height="1.25" fill="#d4d4d4" fill-opacity="0.42"/><rect x="1200.98" y="167.90" width="1.86" height="1.25" fill="#d4d4d4" fill-opacity="0.42"/><rect x="1203.77" y="167.90" width="5.58" height="1.25" fill="#9cdcfe" fill-opacity="0.42"/><rect x="1210.28" y="167.90" width="6.51" height="1.25" fill="#9cdcfe" fill-opacity="0.42"/><rect x="1169.36" y="169.80" width="1.86" height="1.25" fill="#d4d4d4" fill-opacity="0.42"/><rect x="1169.36" y="171.70" width="0.93" height="1.25" fill="#d4d4d4" fill-opacity="0.42"/><rect x="1170.29" y="171.70" width="3.72" height="1.25" fill="#dcdcaa" fill-opacity="0.42"/><rect x="1174.01" y="171.70" width="2.79" height="1.25" fill="#d4d4d4" fill-opacity="0.42"/><rect x="1177.73" y="171.70" width="1.86" height="1.25" fill="#d4d4d4" fill-opacity="0.42"/><rect x="1180.52" y="171.70" width="6.51" height="1.25" fill="#9cdcfe" fill-opacity="0.42"/><rect x="1187.03" y="171.70" width="0.93" height="1.25" fill="#d4d4d4" fill-opacity="0.42"/><rect x="1187.96" y="171.70" width="2.79" height="1.25" fill="#dcdcaa" fill-opacity="0.42"/><rect x="1190.75" y="171.70" width="0.93" height="1.25" fill="#d4d4d4" fill-opacity="0.42"/><rect x="1191.68" y="171.70" width="1.86" height="1.25" fill="#ce9178" fill-opacity="0.42"/><rect x="1194.47" y="171.70" width="7.44" height="1.25" fill="#ce9178" fill-opacity="0.42"/><rect x="1201.91" y="171.70" width="1.86" height="1.25" fill="#d4d4d4" fill-opacity="0.42"/><rect x="1169.36" y="173.60" width="0.93" height="1.25" fill="#d4d4d4" fill-opacity="0.42"/><rect x="1170.29" y="173.60" width="4.65" height="1.25" fill="#dcdcaa" fill-opacity="0.42"/><rect x="1174.94" y="173.60" width="1.86" height="1.25" fill="#d4d4d4" fill-opacity="0.42"/><rect x="1176.80" y="173.60" width="2.79" height="1.25" fill="#9cdcfe" fill-opacity="0.42"/><rect x="1179.59" y="173.60" width="0.93" height="1.25" fill="#d4d4d4" fill-opacity="0.42"/><rect x="1181.45" y="173.60" width="1.86" height="1.25" fill="#d4d4d4" fill-opacity="0.42"/><rect x="1184.24" y="173.60" width="0.93" height="1.25" fill="#d4d4d4" fill-opacity="0.42"/><rect x="1171.22" y="175.50" width="6.51" height="1.25" fill="#9cdcfe" fill-opacity="0.42"/><rect x="1177.73" y="175.50" width="0.93" height="1.25" fill="#d4d4d4" fill-opacity="0.42"/><rect x="1178.66" y="175.50" width="4.65" height="1.25" fill="#dcdcaa" fill-opacity="0.42"/><rect x="1183.31" y="175.50" width="0.93" height="1.25" fill="#d4d4d4" fill-opacity="0.42"/><rect x="1184.24" y="175.50" width="1.86" height="1.25" fill="#ce9178" fill-opacity="0.42"/><rect x="1187.03" y="175.50" width="6.51" height="1.25" fill="#ce9178" fill-opacity="0.42"/><rect x="1193.54" y="175.50" width="0.93" height="1.25" fill="#d4d4d4" fill-opacity="0.42"/><rect x="1195.40" y="175.50" width="2.79" height="1.25" fill="#9cdcfe" fill-opacity="0.42"/><rect x="1198.19" y="175.50" width="1.86" height="1.25" fill="#d4d4d4" fill-opacity="0.42"/><rect x="1171.22" y="177.40" width="6.51" height="1.25" fill="#9cdcfe" fill-opacity="0.42"/><rect x="1177.73" y="177.40" width="0.93" height="1.25" fill="#d4d4d4" fill-opacity="0.42"/><rect x="1178.66" y="177.40" width="3.72" height="1.25" fill="#dcdcaa" fill-opacity="0.42"/><rect x="1182.38" y="177.40" width="3.72" height="1.25" fill="#d4d4d4" fill-opacity="0.42"/><rect x="1169.36" y="179.30" width="2.79" height="1.25" fill="#d4d4d4" fill-opacity="0.42"/><rect x="1167.50" y="183.10" width="1.86" height="1.25" fill="#6a9955" fill-opacity="0.42"/><rect x="1170.29" y="183.10" width="0.93" height="1.25" fill="#6a9955" fill-opacity="0.42"/><rect x="1172.15" y="183.10" width="9.30" height="1.25" fill="#6a9955" fill-opacity="0.42"/><rect x="1167.50" y="185.00" width="2.79" height="1.25" fill="#9cdcfe" fill-opacity="0.42"/><rect x="1170.29" y="185.00" width="0.93" height="1.25" fill="#d4d4d4" fill-opacity="0.42"/><rect x="1171.22" y="185.00" width="2.79" height="1.25" fill="#dcdcaa" fill-opacity="0.42"/><rect x="1174.01" y="185.00" width="0.93" height="1.25" fill="#d4d4d4" fill-opacity="0.42"/><rect x="1174.94" y="185.00" width="6.51" height="1.25" fill="#9cdcfe" fill-opacity="0.42"/><rect x="1181.45" y="185.00" width="0.93" height="1.25" fill="#d4d4d4" fill-opacity="0.42"/><rect x="1182.38" y="185.00" width="3.72" height="1.25" fill="#dcdcaa" fill-opacity="0.42"/><rect x="1186.10" y="185.00" width="3.72" height="1.25" fill="#d4d4d4" fill-opacity="0.42"/><rect x="1167.50" y="186.90" width="2.79" height="1.25" fill="#9cdcfe" fill-opacity="0.42"/><rect x="1170.29" y="186.90" width="0.93" height="1.25" fill="#d4d4d4" fill-opacity="0.42"/><rect x="1171.22" y="186.90" width="2.79" height="1.25" fill="#dcdcaa" fill-opacity="0.42"/><rect x="1174.01" y="186.90" width="0.93" height="1.25" fill="#d4d4d4" fill-opacity="0.42"/><rect x="1174.94" y="186.90" width="11.16" height="1.25" fill="#dcdcaa" fill-opacity="0.42"/><rect x="1186.10" y="186.90" width="3.72" height="1.25" fill="#d4d4d4" fill-opacity="0.42"/><rect x="1167.50" y="188.80" width="2.79" height="1.25" fill="#9cdcfe" fill-opacity="0.42"/><rect x="1170.29" y="188.80" width="0.93" height="1.25" fill="#d4d4d4" fill-opacity="0.42"/><rect x="1171.22" y="188.80" width="2.79" height="1.25" fill="#dcdcaa" fill-opacity="0.42"/><rect x="1174.01" y="188.80" width="0.93" height="1.25" fill="#d4d4d4" fill-opacity="0.42"/><rect x="1174.94" y="188.80" width="5.58" height="1.25" fill="#dcdcaa" fill-opacity="0.42"/><rect x="1180.52" y="188.80" width="0.93" height="1.25" fill="#d4d4d4" fill-opacity="0.42"/><rect x="1181.45" y="188.80" width="4.65" height="1.25" fill="#ce9178" fill-opacity="0.42"/><rect x="1186.10" y="188.80" width="2.79" height="1.25" fill="#d4d4d4" fill-opacity="0.42"/><rect x="1167.50" y="192.60" width="1.86" height="1.25" fill="#6a9955" fill-opacity="0.42"/><rect x="1170.29" y="192.60" width="0.93" height="1.25" fill="#6a9955" fill-opacity="0.42"/><rect x="1172.15" y="192.60" width="6.51" height="1.25" fill="#6a9955" fill-opacity="0.42"/><rect x="1167.50" y="194.50" width="2.79" height="1.25" fill="#9cdcfe" fill-opacity="0.42"/><rect x="1170.29" y="194.50" width="0.93" height="1.25" fill="#d4d4d4" fill-opacity="0.42"/><rect x="1171.22" y="194.50" width="2.79" height="1.25" fill="#dcdcaa" fill-opacity="0.42"/><rect x="1174.01" y="194.50" width="0.93" height="1.25" fill="#d4d4d4" fill-opacity="0.42"/><rect x="1169.36" y="196.40" width="6.51" height="1.25" fill="#dcdcaa" fill-opacity="0.42"/><rect x="1175.87" y="196.40" width="1.86" height="1.25" fill="#d4d4d4" fill-opacity="0.42"/><rect x="1171.22" y="198.30" width="5.58" height="1.25" fill="#9cdcfe" fill-opacity="0.42"/><rect x="1176.80" y="198.30" width="0.93" height="1.25" fill="#d4d4d4" fill-opacity="0.42"/><rect x="1178.66" y="198.30" width="6.51" height="1.25" fill="#9cdcfe" fill-opacity="0.42"/><rect x="1185.17" y="198.30" width="0.93" height="1.25" fill="#d4d4d4" fill-opacity="0.42"/><rect x="1186.10" y="198.30" width="2.79" height="1.25" fill="#9cdcfe" fill-opacity="0.42"/><rect x="1188.89" y="198.30" width="0.93" height="1.25" fill="#d4d4d4" fill-opacity="0.42"/><rect x="1189.82" y="198.30" width="13.02" height="1.25" fill="#4fc1ff" fill-opacity="0.42"/><rect x="1202.84" y="198.30" width="0.93" height="1.25" fill="#d4d4d4" fill-opacity="0.42"/><rect x="1171.22" y="200.20" width="5.58" height="1.25" fill="#9cdcfe" fill-opacity="0.42"/><rect x="1176.80" y="200.20" width="0.93" height="1.25" fill="#d4d4d4" fill-opacity="0.42"/><rect x="1178.66" y="200.20" width="4.65" height="1.25" fill="#569cd6" fill-opacity="0.42"/><rect x="1183.31" y="200.20" width="0.93" height="1.25" fill="#d4d4d4" fill-opacity="0.42"/><rect x="1171.22" y="202.10" width="15.81" height="1.25" fill="#9cdcfe" fill-opacity="0.42"/><rect x="1187.03" y="202.10" width="0.93" height="1.25" fill="#d4d4d4" fill-opacity="0.42"/><rect x="1188.89" y="202.10" width="4.65" height="1.25" fill="#569cd6" fill-opacity="0.42"/><rect x="1193.54" y="202.10" width="0.93" height="1.25" fill="#d4d4d4" fill-opacity="0.42"/><rect x="1171.22" y="204.00" width="4.65" height="1.25" fill="#9cdcfe" fill-opacity="0.42"/><rect x="1175.87" y="204.00" width="0.93" height="1.25" fill="#d4d4d4" fill-opacity="0.42"/><rect x="1177.73" y="204.00" width="9.30" height="1.25" fill="#9cdcfe" fill-opacity="0.42"/><rect x="1187.03" y="204.00" width="0.93" height="1.25" fill="#d4d4d4" fill-opacity="0.42"/><rect x="1187.96" y="204.00" width="5.58" height="1.25" fill="#dcdcaa" fill-opacity="0.42"/><rect x="1193.54" y="204.00" width="1.86" height="1.25" fill="#d4d4d4" fill-opacity="0.42"/><rect x="1196.33" y="204.00" width="7.44" height="1.25" fill="#9cdcfe" fill-opacity="0.42"/><rect x="1203.77" y="204.00" width="0.93" height="1.25" fill="#d4d4d4" fill-opacity="0.42"/><rect x="1205.63" y="204.00" width="8.37" height="1.25" fill="#4fc1ff" fill-opacity="0.42"/><rect x="1214.93" y="204.00" width="2.79" height="1.25" fill="#d4d4d4" fill-opacity="0.42"/><rect x="1169.36" y="205.90" width="1.86" height="1.25" fill="#d4d4d4" fill-opacity="0.42"/><rect x="1167.50" y="207.80" width="1.86" height="1.25" fill="#d4d4d4" fill-opacity="0.42"/><rect x="1167.50" y="211.60" width="1.86" height="1.25" fill="#6a9955" fill-opacity="0.42"/><rect x="1170.29" y="211.60" width="0.93" height="1.25" fill="#6a9955" fill-opacity="0.42"/><rect x="1172.15" y="211.60" width="3.72" height="1.25" fill="#6a9955" fill-opacity="0.42"/><rect x="1167.50" y="213.50" width="2.79" height="1.25" fill="#9cdcfe" fill-opacity="0.42"/><rect x="1170.29" y="213.50" width="0.93" height="1.25" fill="#d4d4d4" fill-opacity="0.42"/><rect x="1171.22" y="213.50" width="2.79" height="1.25" fill="#dcdcaa" fill-opacity="0.42"/><rect x="1174.01" y="213.50" width="0.93" height="1.25" fill="#d4d4d4" fill-opacity="0.42"/><rect x="1174.94" y="213.50" width="3.72" height="1.25" fill="#dcdcaa" fill-opacity="0.42"/><rect x="1178.66" y="213.50" width="1.86" height="1.25" fill="#d4d4d4" fill-opacity="0.42"/><rect x="1181.45" y="213.50" width="5.58" height="1.25" fill="#9cdcfe" fill-opacity="0.42"/><rect x="1187.03" y="213.50" width="0.93" height="1.25" fill="#d4d4d4" fill-opacity="0.42"/><rect x="1188.89" y="213.50" width="21.39" height="1.25" fill="#ce9178" fill-opacity="0.42"/><rect x="1210.28" y="213.50" width="0.93" height="1.25" fill="#d4d4d4" fill-opacity="0.42"/><rect x="1212.14" y="213.50" width="10.23" height="1.25" fill="#9cdcfe" fill-opacity="0.42"/><rect x="1222.37" y="213.50" width="0.93" height="1.25" fill="#d4d4d4" fill-opacity="0.42"/><rect x="1224.23" y="213.50" width="3.72" height="1.25" fill="#569cd6" fill-opacity="0.42"/><rect x="1228.88" y="213.50" width="3.72" height="1.25" fill="#d4d4d4" fill-opacity="0.42"/><rect x="1167.50" y="215.40" width="2.79" height="1.25" fill="#9cdcfe" fill-opacity="0.42"/><rect x="1170.29" y="215.40" width="0.93" height="1.25" fill="#d4d4d4" fill-opacity="0.42"/><rect x="1171.22" y="215.40" width="2.79" height="1.25" fill="#dcdcaa" fill-opacity="0.42"/><rect x="1174.01" y="215.40" width="0.93" height="1.25" fill="#d4d4d4" fill-opacity="0.42"/><rect x="1174.94" y="215.40" width="7.44" height="1.25" fill="#9cdcfe" fill-opacity="0.42"/><rect x="1182.38" y="215.40" width="0.93" height="1.25" fill="#d4d4d4" fill-opacity="0.42"/><rect x="1183.31" y="215.40" width="9.30" height="1.25" fill="#dcdcaa" fill-opacity="0.42"/><rect x="1192.61" y="215.40" width="3.72" height="1.25" fill="#d4d4d4" fill-opacity="0.42"/><rect x="1167.50" y="217.30" width="2.79" height="1.25" fill="#9cdcfe" fill-opacity="0.42"/><rect x="1170.29" y="217.30" width="0.93" height="1.25" fill="#d4d4d4" fill-opacity="0.42"/><rect x="1171.22" y="217.30" width="2.79" height="1.25" fill="#dcdcaa" fill-opacity="0.42"/><rect x="1174.01" y="217.30" width="0.93" height="1.25" fill="#d4d4d4" fill-opacity="0.42"/><rect x="1174.94" y="217.30" width="7.44" height="1.25" fill="#9cdcfe" fill-opacity="0.42"/><rect x="1182.38" y="217.30" width="0.93" height="1.25" fill="#d4d4d4" fill-opacity="0.42"/><rect x="1183.31" y="217.30" width="6.51" height="1.25" fill="#dcdcaa" fill-opacity="0.42"/><rect x="1189.82" y="217.30" width="3.72" height="1.25" fill="#d4d4d4" fill-opacity="0.42"/><rect x="1167.50" y="221.10" width="1.86" height="1.25" fill="#6a9955" fill-opacity="0.42"/><rect x="1170.29" y="221.10" width="0.93" height="1.25" fill="#6a9955" fill-opacity="0.42"/><rect x="1172.15" y="221.10" width="5.58" height="1.25" fill="#6a9955" fill-opacity="0.42"/><rect x="1167.50" y="223.00" width="2.79" height="1.25" fill="#9cdcfe" fill-opacity="0.42"/><rect x="1170.29" y="223.00" width="0.93" height="1.25" fill="#d4d4d4" fill-opacity="0.42"/><rect x="1171.22" y="223.00" width="2.79" height="1.25" fill="#dcdcaa" fill-opacity="0.42"/><rect x="1174.01" y="223.00" width="0.93" height="1.25" fill="#d4d4d4" fill-opacity="0.42"/><rect x="1174.94" y="223.00" width="6.51" height="1.25" fill="#ce9178" fill-opacity="0.42"/><rect x="1181.45" y="223.00" width="0.93" height="1.25" fill="#d4d4d4" fill-opacity="0.42"/><rect x="1183.31" y="223.00" width="9.30" height="1.25" fill="#9cdcfe" fill-opacity="0.42"/><rect x="1192.61" y="223.00" width="1.86" height="1.25" fill="#d4d4d4" fill-opacity="0.42"/><rect x="1167.50" y="224.90" width="2.79" height="1.25" fill="#9cdcfe" fill-opacity="0.42"/><rect x="1170.29" y="224.90" width="0.93" height="1.25" fill="#d4d4d4" fill-opacity="0.42"/><rect x="1171.22" y="224.90" width="2.79" height="1.25" fill="#dcdcaa" fill-opacity="0.42"/><rect x="1174.01" y="224.90" width="0.93" height="1.25" fill="#d4d4d4" fill-opacity="0.42"/><rect x="1174.94" y="224.90" width="7.44" height="1.25" fill="#ce9178" fill-opacity="0.42"/><rect x="1182.38" y="224.90" width="0.93" height="1.25" fill="#d4d4d4" fill-opacity="0.42"/><rect x="1184.24" y="224.90" width="10.23" height="1.25" fill="#9cdcfe" fill-opacity="0.42"/><rect x="1194.47" y="224.90" width="1.86" height="1.25" fill="#d4d4d4" fill-opacity="0.42"/><rect x="1167.50" y="228.70" width="1.86" height="1.25" fill="#6a9955" fill-opacity="0.42"/><rect x="1170.29" y="228.70" width="0.93" height="1.25" fill="#6a9955" fill-opacity="0.42"/><rect x="1172.15" y="228.70" width="5.58" height="1.25" fill="#6a9955" fill-opacity="0.42"/><rect x="1178.66" y="228.70" width="3.72" height="1.25" fill="#6a9955" fill-opacity="0.42"/><rect x="1167.50" y="230.60" width="2.79" height="1.25" fill="#9cdcfe" fill-opacity="0.42"/><rect x="1170.29" y="230.60" width="0.93" height="1.25" fill="#d4d4d4" fill-opacity="0.42"/><rect x="1171.22" y="230.60" width="2.79" height="1.25" fill="#dcdcaa" fill-opacity="0.42"/><rect x="1174.01" y="230.60" width="0.93" height="1.25" fill="#d4d4d4" fill-opacity="0.42"/><rect x="1169.36" y="232.50" width="13.02" height="1.25" fill="#ce9178" fill-opacity="0.42"/><rect x="1182.38" y="232.50" width="0.93" height="1.25" fill="#d4d4d4" fill-opacity="0.42"/><rect x="1169.36" y="234.40" width="7.44" height="1.25" fill="#9cdcfe" fill-opacity="0.42"/><rect x="1176.80" y="234.40" width="0.93" height="1.25" fill="#d4d4d4" fill-opacity="0.42"/><rect x="1177.73" y="234.40" width="11.16" height="1.25" fill="#dcdcaa" fill-opacity="0.42"/><rect x="1188.89" y="234.40" width="0.93" height="1.25" fill="#d4d4d4" fill-opacity="0.42"/><rect x="1189.82" y="234.40" width="7.44" height="1.25" fill="#ce9178" fill-opacity="0.42"/><rect x="1197.26" y="234.40" width="0.93" height="1.25" fill="#d4d4d4" fill-opacity="0.42"/><rect x="1199.12" y="234.40" width="0.93" height="1.25" fill="#d4d4d4" fill-opacity="0.42"/><rect x="1200.98" y="234.40" width="4.65" height="1.25" fill="#9cdcfe" fill-opacity="0.42"/><rect x="1205.63" y="234.40" width="0.93" height="1.25" fill="#d4d4d4" fill-opacity="0.42"/><rect x="1207.49" y="234.40" width="0.93" height="1.25" fill="#d4d4d4" fill-opacity="0.42"/><rect x="1208.42" y="234.40" width="8.37" height="1.25" fill="#ce9178" fill-opacity="0.42"/><rect x="1216.79" y="234.40" width="0.93" height="1.25" fill="#d4d4d4" fill-opacity="0.42"/><rect x="1218.65" y="234.40" width="6.51" height="1.25" fill="#ce9178" fill-opacity="0.42"/><rect x="1225.16" y="234.40" width="0.93" height="1.25" fill="#d4d4d4" fill-opacity="0.42"/><rect x="1227.02" y="234.40" width="1.86" height="1.25" fill="#d4d4d4" fill-opacity="0.42"/><rect x="1167.50" y="236.30" width="1.86" height="1.25" fill="#d4d4d4" fill-opacity="0.42"/><rect x="1167.50" y="240.10" width="1.86" height="1.25" fill="#6a9955" fill-opacity="0.42"/><rect x="1170.29" y="240.10" width="0.93" height="1.25" fill="#6a9955" fill-opacity="0.42"/><rect x="1172.15" y="240.10" width="7.44" height="1.25" fill="#6a9955" fill-opacity="0.42"/><rect x="1180.52" y="240.10" width="3.72" height="1.25" fill="#6a9955" fill-opacity="0.42"/><rect x="1167.50" y="242.00" width="2.79" height="1.25" fill="#9cdcfe" fill-opacity="0.42"/><rect x="1170.29" y="242.00" width="0.93" height="1.25" fill="#d4d4d4" fill-opacity="0.42"/><rect x="1171.22" y="242.00" width="2.79" height="1.25" fill="#dcdcaa" fill-opacity="0.42"/><rect x="1174.01" y="242.00" width="0.93" height="1.25" fill="#d4d4d4" fill-opacity="0.42"/><rect x="1174.94" y="242.00" width="14.88" height="1.25" fill="#ce9178" fill-opacity="0.42"/><rect x="1189.82" y="242.00" width="0.93" height="1.25" fill="#d4d4d4" fill-opacity="0.42"/><rect x="1191.68" y="242.00" width="11.16" height="1.25" fill="#9cdcfe" fill-opacity="0.42"/><rect x="1202.84" y="242.00" width="1.86" height="1.25" fill="#d4d4d4" fill-opacity="0.42"/><rect x="1167.50" y="243.90" width="2.79" height="1.25" fill="#9cdcfe" fill-opacity="0.42"/><rect x="1170.29" y="243.90" width="0.93" height="1.25" fill="#d4d4d4" fill-opacity="0.42"/><rect x="1171.22" y="243.90" width="2.79" height="1.25" fill="#dcdcaa" fill-opacity="0.42"/><rect x="1174.01" y="243.90" width="0.93" height="1.25" fill="#d4d4d4" fill-opacity="0.42"/><rect x="1174.94" y="243.90" width="13.95" height="1.25" fill="#ce9178" fill-opacity="0.42"/><rect x="1188.89" y="243.90" width="0.93" height="1.25" fill="#d4d4d4" fill-opacity="0.42"/><rect x="1190.75" y="243.90" width="10.23" height="1.25" fill="#9cdcfe" fill-opacity="0.42"/><rect x="1200.98" y="243.90" width="1.86" height="1.25" fill="#d4d4d4" fill-opacity="0.42"/><rect x="1167.50" y="247.70" width="1.86" height="1.25" fill="#6a9955" fill-opacity="0.42"/><rect x="1170.29" y="247.70" width="0.93" height="1.25" fill="#6a9955" fill-opacity="0.42"/><rect x="1172.15" y="247.70" width="4.65" height="1.25" fill="#6a9955" fill-opacity="0.42"/><rect x="1177.73" y="247.70" width="5.58" height="1.25" fill="#6a9955" fill-opacity="0.42"/><rect x="1167.50" y="249.60" width="4.65" height="1.25" fill="#569cd6" fill-opacity="0.42"/><rect x="1173.08" y="249.60" width="3.72" height="1.25" fill="#4fc1ff" fill-opacity="0.42"/><rect x="1177.73" y="249.60" width="0.93" height="1.25" fill="#d4d4d4" fill-opacity="0.42"/><rect x="1179.59" y="249.60" width="6.51" height="1.25" fill="#9cdcfe" fill-opacity="0.42"/><rect x="1186.10" y="249.60" width="0.93" height="1.25" fill="#d4d4d4" fill-opacity="0.42"/><rect x="1187.03" y="249.60" width="2.79" height="1.25" fill="#9cdcfe" fill-opacity="0.42"/><rect x="1189.82" y="249.60" width="0.93" height="1.25" fill="#d4d4d4" fill-opacity="0.42"/><rect x="1190.75" y="249.60" width="3.72" height="1.25" fill="#4fc1ff" fill-opacity="0.42"/><rect x="1195.40" y="249.60" width="1.86" height="1.25" fill="#d4d4d4" fill-opacity="0.42"/><rect x="1198.19" y="249.60" width="4.65" height="1.25" fill="#d4d4d4" fill-opacity="0.42"/><rect x="1167.50" y="251.50" width="2.79" height="1.25" fill="#9cdcfe" fill-opacity="0.42"/><rect x="1170.29" y="251.50" width="0.93" height="1.25" fill="#d4d4d4" fill-opacity="0.42"/><rect x="1171.22" y="251.50" width="5.58" height="1.25" fill="#dcdcaa" fill-opacity="0.42"/><rect x="1176.80" y="251.50" width="0.93" height="1.25" fill="#d4d4d4" fill-opacity="0.42"/><rect x="1177.73" y="251.50" width="3.72" height="1.25" fill="#4fc1ff" fill-opacity="0.42"/><rect x="1181.45" y="251.50" width="0.93" height="1.25" fill="#d4d4d4" fill-opacity="0.42"/><rect x="1183.31" y="251.50" width="1.86" height="1.25" fill="#d4d4d4" fill-opacity="0.42"/><rect x="1186.10" y="251.50" width="1.86" height="1.25" fill="#d4d4d4" fill-opacity="0.42"/><rect x="1188.89" y="251.50" width="0.93" height="1.25" fill="#d4d4d4" fill-opacity="0.42"/><rect x="1169.36" y="253.40" width="6.51" height="1.25" fill="#9cdcfe" fill-opacity="0.42"/><rect x="1175.87" y="253.40" width="0.93" height="1.25" fill="#d4d4d4" fill-opacity="0.42"/><rect x="1176.80" y="253.40" width="2.79" height="1.25" fill="#dcdcaa" fill-opacity="0.42"/><rect x="1179.59" y="253.40" width="0.93" height="1.25" fill="#d4d4d4" fill-opacity="0.42"/><rect x="1180.52" y="253.40" width="1.86" height="1.25" fill="#ce9178" fill-opacity="0.42"/><rect x="1183.31" y="253.40" width="5.58" height="1.25" fill="#ce9178" fill-opacity="0.42"/><rect x="1189.82" y="253.40" width="6.51" height="1.25" fill="#ce9178" fill-opacity="0.42"/><rect x="1197.26" y="253.40" width="1.86" height="1.25" fill="#ce9178" fill-opacity="0.42"/><rect x="1200.05" y="253.40" width="3.72" height="1.25" fill="#ce9178" fill-opacity="0.42"/><rect x="1204.70" y="253.40" width="7.44" height="1.25" fill="#ce9178" fill-opacity="0.42"/><rect x="1212.14" y="253.40" width="1.86" height="1.25" fill="#d4d4d4" fill-opacity="0.42"/><rect x="1167.50" y="255.30" width="2.79" height="1.25" fill="#d4d4d4" fill-opacity="0.42"/><rect x="1167.50" y="259.10" width="1.86" height="1.25" fill="#6a9955" fill-opacity="0.42"/><rect x="1170.29" y="259.10" width="0.93" height="1.25" fill="#6a9955" fill-opacity="0.42"/><rect x="1172.15" y="259.10" width="4.65" height="1.25" fill="#6a9955" fill-opacity="0.42"/><rect x="1177.73" y="259.10" width="6.51" height="1.25" fill="#6a9955" fill-opacity="0.42"/><rect x="1167.50" y="261.00" width="2.79" height="1.25" fill="#9cdcfe" fill-opacity="0.42"/><rect x="1170.29" y="261.00" width="0.93" height="1.25" fill="#d4d4d4" fill-opacity="0.42"/><rect x="1171.22" y="261.00" width="2.79" height="1.25" fill="#dcdcaa" fill-opacity="0.42"/><rect x="1174.01" y="261.00" width="1.86" height="1.25" fill="#d4d4d4" fill-opacity="0.42"/><rect x="1175.87" y="261.00" width="2.79" height="1.25" fill="#9cdcfe" fill-opacity="0.42"/><rect x="1178.66" y="261.00" width="0.93" height="1.25" fill="#d4d4d4" fill-opacity="0.42"/><rect x="1180.52" y="261.00" width="2.79" height="1.25" fill="#9cdcfe" fill-opacity="0.42"/><rect x="1183.31" y="261.00" width="0.93" height="1.25" fill="#d4d4d4" fill-opacity="0.42"/><rect x="1185.17" y="261.00" width="2.79" height="1.25" fill="#9cdcfe" fill-opacity="0.42"/><rect x="1187.96" y="261.00" width="0.93" height="1.25" fill="#d4d4d4" fill-opacity="0.42"/><rect x="1189.82" y="261.00" width="3.72" height="1.25" fill="#9cdcfe" fill-opacity="0.42"/><rect x="1193.54" y="261.00" width="0.93" height="1.25" fill="#d4d4d4" fill-opacity="0.42"/><rect x="1195.40" y="261.00" width="1.86" height="1.25" fill="#d4d4d4" fill-opacity="0.42"/><rect x="1198.19" y="261.00" width="0.93" height="1.25" fill="#d4d4d4" fill-opacity="0.42"/><rect x="1169.36" y="262.90" width="2.79" height="1.25" fill="#9cdcfe" fill-opacity="0.42"/><rect x="1172.15" y="262.90" width="0.93" height="1.25" fill="#d4d4d4" fill-opacity="0.42"/><rect x="1173.08" y="262.90" width="5.58" height="1.25" fill="#dcdcaa" fill-opacity="0.42"/><rect x="1178.66" y="262.90" width="5.58" height="1.25" fill="#d4d4d4" fill-opacity="0.42"/><rect x="1184.24" y="262.90" width="3.72" height="1.25" fill="#dcdcaa" fill-opacity="0.42"/><rect x="1187.96" y="262.90" width="1.86" height="1.25" fill="#d4d4d4" fill-opacity="0.42"/><rect x="1190.75" y="262.90" width="6.51" height="1.25" fill="#9cdcfe" fill-opacity="0.42"/><rect x="1197.26" y="262.90" width="0.93" height="1.25" fill="#d4d4d4" fill-opacity="0.42"/><rect x="1199.12" y="262.90" width="2.79" height="1.25" fill="#9cdcfe" fill-opacity="0.42"/><rect x="1201.91" y="262.90" width="0.93" height="1.25" fill="#d4d4d4" fill-opacity="0.42"/><rect x="1202.84" y="262.90" width="6.51" height="1.25" fill="#9cdcfe" fill-opacity="0.42"/><rect x="1210.28" y="262.90" width="2.79" height="1.25" fill="#d4d4d4" fill-opacity="0.42"/><rect x="1167.50" y="264.80" width="2.79" height="1.25" fill="#d4d4d4" fill-opacity="0.42"/><rect x="1167.50" y="268.60" width="1.86" height="1.25" fill="#6a9955" fill-opacity="0.42"/><rect x="1170.29" y="268.60" width="0.93" height="1.25" fill="#6a9955" fill-opacity="0.42"/><rect x="1172.15" y="268.60" width="3.72" height="1.25" fill="#6a9955" fill-opacity="0.42"/><rect x="1176.80" y="268.60" width="4.65" height="1.25" fill="#6a9955" fill-opacity="0.42"/><rect x="1167.50" y="270.50" width="2.79" height="1.25" fill="#9cdcfe" fill-opacity="0.42"/><rect x="1170.29" y="270.50" width="0.93" height="1.25" fill="#d4d4d4" fill-opacity="0.42"/><rect x="1171.22" y="270.50" width="2.79" height="1.25" fill="#dcdcaa" fill-opacity="0.42"/><rect x="1174.01" y="270.50" width="0.93" height="1.25" fill="#d4d4d4" fill-opacity="0.42"/><rect x="1174.94" y="270.50" width="2.79" height="1.25" fill="#ce9178" fill-opacity="0.42"/><rect x="1177.73" y="270.50" width="0.93" height="1.25" fill="#d4d4d4" fill-opacity="0.42"/><rect x="1179.59" y="270.50" width="0.93" height="1.25" fill="#d4d4d4" fill-opacity="0.42"/><rect x="1180.52" y="270.50" width="2.79" height="1.25" fill="#9cdcfe" fill-opacity="0.42"/><rect x="1183.31" y="270.50" width="0.93" height="1.25" fill="#d4d4d4" fill-opacity="0.42"/><rect x="1185.17" y="270.50" width="2.79" height="1.25" fill="#9cdcfe" fill-opacity="0.42"/><rect x="1187.96" y="270.50" width="0.93" height="1.25" fill="#d4d4d4" fill-opacity="0.42"/><rect x="1189.82" y="270.50" width="1.86" height="1.25" fill="#d4d4d4" fill-opacity="0.42"/><rect x="1192.61" y="270.50" width="0.93" height="1.25" fill="#d4d4d4" fill-opacity="0.42"/><rect x="1169.36" y="272.40" width="2.79" height="1.25" fill="#9cdcfe" fill-opacity="0.42"/><rect x="1172.15" y="272.40" width="0.93" height="1.25" fill="#d4d4d4" fill-opacity="0.42"/><rect x="1173.08" y="272.40" width="3.72" height="1.25" fill="#dcdcaa" fill-opacity="0.42"/><rect x="1176.80" y="272.40" width="0.93" height="1.25" fill="#d4d4d4" fill-opacity="0.42"/><rect x="1177.73" y="272.40" width="3.72" height="1.25" fill="#ce9178" fill-opacity="0.42"/><rect x="1182.38" y="272.40" width="1.86" height="1.25" fill="#ce9178" fill-opacity="0.42"/><rect x="1185.17" y="272.40" width="10.23" height="1.25" fill="#ce9178" fill-opacity="0.42"/><rect x="1195.40" y="272.40" width="1.86" height="1.25" fill="#d4d4d4" fill-opacity="0.42"/><rect x="1167.50" y="274.30" width="2.79" height="1.25" fill="#d4d4d4" fill-opacity="0.42"/><rect x="1167.50" y="278.10" width="1.86" height="1.25" fill="#6a9955" fill-opacity="0.42"/><rect x="1170.29" y="278.10" width="0.93" height="1.25" fill="#6a9955" fill-opacity="0.42"/><rect x="1172.15" y="278.10" width="5.58" height="1.25" fill="#6a9955" fill-opacity="0.42"/><rect x="1167.50" y="280.00" width="2.79" height="1.25" fill="#9cdcfe" fill-opacity="0.42"/><rect x="1170.29" y="280.00" width="0.93" height="1.25" fill="#d4d4d4" fill-opacity="0.42"/><rect x="1171.22" y="280.00" width="2.79" height="1.25" fill="#dcdcaa" fill-opacity="0.42"/><rect x="1174.01" y="280.00" width="0.93" height="1.25" fill="#d4d4d4" fill-opacity="0.42"/><rect x="1174.94" y="280.00" width="8.37" height="1.25" fill="#ce9178" fill-opacity="0.42"/><rect x="1183.31" y="280.00" width="0.93" height="1.25" fill="#d4d4d4" fill-opacity="0.42"/><rect x="1185.17" y="280.00" width="0.93" height="1.25" fill="#d4d4d4" fill-opacity="0.42"/><rect x="1186.10" y="280.00" width="2.79" height="1.25" fill="#9cdcfe" fill-opacity="0.42"/><rect x="1188.89" y="280.00" width="0.93" height="1.25" fill="#d4d4d4" fill-opacity="0.42"/><rect x="1190.75" y="280.00" width="2.79" height="1.25" fill="#9cdcfe" fill-opacity="0.42"/><rect x="1193.54" y="280.00" width="0.93" height="1.25" fill="#d4d4d4" fill-opacity="0.42"/><rect x="1195.40" y="280.00" width="1.86" height="1.25" fill="#d4d4d4" fill-opacity="0.42"/><rect x="1198.19" y="280.00" width="0.93" height="1.25" fill="#d4d4d4" fill-opacity="0.42"/><rect x="1169.36" y="281.90" width="2.79" height="1.25" fill="#9cdcfe" fill-opacity="0.42"/><rect x="1172.15" y="281.90" width="0.93" height="1.25" fill="#d4d4d4" fill-opacity="0.42"/><rect x="1173.08" y="281.90" width="5.58" height="1.25" fill="#dcdcaa" fill-opacity="0.42"/><rect x="1178.66" y="281.90" width="2.79" height="1.25" fill="#d4d4d4" fill-opacity="0.42"/><rect x="1182.38" y="281.90" width="1.86" height="1.25" fill="#d4d4d4" fill-opacity="0.42"/><rect x="1185.17" y="281.90" width="2.79" height="1.25" fill="#9cdcfe" fill-opacity="0.42"/><rect x="1187.96" y="281.90" width="0.93" height="1.25" fill="#d4d4d4" fill-opacity="0.42"/><rect x="1188.89" y="281.90" width="7.44" height="1.25" fill="#dcdcaa" fill-opacity="0.42"/><rect x="1196.33" y="281.90" width="0.93" height="1.25" fill="#d4d4d4" fill-opacity="0.42"/><rect x="1197.26" y="281.90" width="2.79" height="1.25" fill="#ce9178" fill-opacity="0.42"/><rect x="1200.05" y="281.90" width="2.79" height="1.25" fill="#d4d4d4" fill-opacity="0.42"/><rect x="1167.50" y="283.80" width="2.79" height="1.25" fill="#d4d4d4" fill-opacity="0.42"/><rect x="1167.50" y="287.60" width="1.86" height="1.25" fill="#6a9955" fill-opacity="0.42"/><rect x="1170.29" y="287.60" width="0.93" height="1.25" fill="#6a9955" fill-opacity="0.42"/><rect x="1172.15" y="287.60" width="6.51" height="1.25" fill="#6a9955" fill-opacity="0.42"/><rect x="1167.50" y="289.50" width="2.79" height="1.25" fill="#9cdcfe" fill-opacity="0.42"/><rect x="1170.29" y="289.50" width="0.93" height="1.25" fill="#d4d4d4" fill-opacity="0.42"/><rect x="1171.22" y="289.50" width="2.79" height="1.25" fill="#dcdcaa" fill-opacity="0.42"/><rect x="1174.01" y="289.50" width="0.93" height="1.25" fill="#d4d4d4" fill-opacity="0.42"/><rect x="1174.94" y="289.50" width="9.30" height="1.25" fill="#ce9178" fill-opacity="0.42"/><rect x="1184.24" y="289.50" width="0.93" height="1.25" fill="#d4d4d4" fill-opacity="0.42"/><rect x="1186.10" y="289.50" width="0.93" height="1.25" fill="#d4d4d4" fill-opacity="0.42"/><rect x="1187.03" y="289.50" width="2.79" height="1.25" fill="#9cdcfe" fill-opacity="0.42"/><rect x="1189.82" y="289.50" width="0.93" height="1.25" fill="#d4d4d4" fill-opacity="0.42"/><rect x="1191.68" y="289.50" width="2.79" height="1.25" fill="#9cdcfe" fill-opacity="0.42"/><rect x="1194.47" y="289.50" width="0.93" height="1.25" fill="#d4d4d4" fill-opacity="0.42"/><rect x="1196.33" y="289.50" width="1.86" height="1.25" fill="#d4d4d4" fill-opacity="0.42"/><rect x="1199.12" y="289.50" width="0.93" height="1.25" fill="#d4d4d4" fill-opacity="0.42"/><rect x="1169.36" y="291.40" width="2.79" height="1.25" fill="#9cdcfe" fill-opacity="0.42"/><rect x="1172.15" y="291.40" width="0.93" height="1.25" fill="#d4d4d4" fill-opacity="0.42"/><rect x="1173.08" y="291.40" width="3.72" height="1.25" fill="#dcdcaa" fill-opacity="0.42"/><rect x="1176.80" y="291.40" width="1.86" height="1.25" fill="#d4d4d4" fill-opacity="0.42"/><rect x="1179.59" y="291.40" width="3.72" height="1.25" fill="#9cdcfe" fill-opacity="0.42"/><rect x="1183.31" y="291.40" width="0.93" height="1.25" fill="#d4d4d4" fill-opacity="0.42"/><rect x="1185.17" y="291.40" width="2.79" height="1.25" fill="#9cdcfe" fill-opacity="0.42"/><rect x="1187.96" y="291.40" width="0.93" height="1.25" fill="#d4d4d4" fill-opacity="0.42"/><rect x="1188.89" y="291.40" width="3.72" height="1.25" fill="#9cdcfe" fill-opacity="0.42"/><rect x="1192.61" y="291.40" width="0.93" height="1.25" fill="#d4d4d4" fill-opacity="0.42"/><rect x="1194.47" y="291.40" width="6.51" height="1.25" fill="#9cdcfe" fill-opacity="0.42"/><rect x="1200.98" y="291.40" width="0.93" height="1.25" fill="#d4d4d4" fill-opacity="0.42"/><rect x="1202.84" y="291.40" width="3.72" height="1.25" fill="#569cd6" fill-opacity="0.42"/><rect x="1207.49" y="291.40" width="2.79" height="1.25" fill="#d4d4d4" fill-opacity="0.42"/><rect x="1167.50" y="293.30" width="2.79" height="1.25" fill="#d4d4d4" fill-opacity="0.42"/></svg><!--/MINI-->
<div class="a" style="left:1167px;top:103px;width:97.4px;height:25.8px;background:rgba(121,121,121,0.36)"></div>
<div class="a" style="left:1167px;top:103px;width:6.6px;height:25.8px;background:rgba(160,160,160,0.35)"></div>
<div class="a" style="left:1265px;top:103px;width:1px;height:546.5px;background:#2b2b2b"></div>
<div class="a" style="left:1266px;top:103px;width:14px;height:106.5px;background:rgba(121,121,121,0.2)"></div>
<div class="a" style="left:1266px;top:103.7px;width:14px;height:1.6px;background:#9a9a9a"></div>
<div class="a" style="left:1270.2px;top:104.5px;width:6px;height:57px;background:#7a7a7a"></div>
<div id="status" class="a"></div>
<div id="remote" class="a"></div>

<!-- STATUS -->
<svg style="left:12px;top:654px" width="15" height="14" viewBox="0 0 15 14"><path d="M1 12.5 L6 7.5 L1 2.5" stroke="#ffffff" stroke-width="1.4" fill="none" transform="translate(0,1)"/><path d="M14 0.5 L9 5.5 L14 10.5" stroke="#ffffff" stroke-width="1.4" fill="none" transform="translate(0,-1)"/></svg>
<svg style="left:48px;top:652.5px" width="15" height="17" viewBox="0 0 15 17"><circle cx="4" cy="3" r="2.2" stroke="#fff" stroke-width="1.5" fill="none"/><circle cx="11" cy="6.2" r="2.2" stroke="#fff" stroke-width="1.5" fill="none"/><circle cx="4" cy="14" r="2.2" stroke="#fff" stroke-width="1.5" fill="none"/><path d="M4 5.2 V11.8 M11 8.4 C11 11 8 11.5 4.5 12.2" stroke="#fff" stroke-width="1.5" fill="none"/></svg>
<div class="st" style="left:67px">main</div>
<svg style="left:103px;top:654.5px" width="16" height="13" viewBox="0 0 16 13"><path d="M2.5 6 A5.5 5.5 0 0 1 12.5 3.2 M13.5 7 A5.5 5.5 0 0 1 3.5 9.8" stroke="#fff" stroke-width="1.6" fill="none"/><path d="M13.8 1 V5.2 H9.6 Z M2.2 12 V7.8 H6.4 Z" fill="#fff"/></svg>
<svg style="left:137px;top:653px" width="15" height="16" viewBox="0 0 15 16"><circle cx="3.5" cy="2.7" r="2.1" stroke="#fff" stroke-width="1.4" fill="none"/><circle cx="3.5" cy="13.3" r="2.1" stroke="#fff" stroke-width="1.4" fill="none"/><circle cx="11.5" cy="8" r="2.1" stroke="#fff" stroke-width="1.4" fill="none"/><path d="M3.5 4.8 V11.2 M7.5 1 V15 M7.5 8 H9.4" stroke="#fff" stroke-width="1.4" fill="none"/></svg>
<svg style="left:171px;top:653px" width="31" height="16" viewBox="0 0 31 16"><path d="M3 9 L7 5 C10 2 13 1 15 1 C15 3 14 6 11 9 L7 13 Z" stroke="#fff" stroke-width="1.4" fill="none" stroke-linejoin="round"/><path d="M7 5 H3 L1 7 L3 9 M11 9 V13 L9 15 L7 13 M1 15 L4 12" stroke="#fff" stroke-width="1.3" fill="none"/><circle cx="10.5" cy="5.5" r="1.3" fill="#fff"/><path d="M19 12 L22.5 15 L28.5 9 C30 7.5 30 5 28.5 3.5 C27 2 24.5 2 23 3.5 L17 9.5 Z" stroke="#fff" stroke-width="1.4" fill="none" stroke-linejoin="round" transform="translate(0,-1)"/><path d="M17 15.5 L19.5 13 M23 6 L26 9" stroke="#fff" stroke-width="1.3"/></svg>
<div class="st" style="left:204.5px">Launchpad</div>
<svg style="left:289.5px;top:653.5px" width="15" height="15" viewBox="0 0 15 15"><circle cx="7.5" cy="7.5" r="6.5" stroke="#fff" stroke-width="1.4" fill="none"/><path d="M5 5 L10 10 M10 5 L5 10" stroke="#fff" stroke-width="1.4"/></svg>
<div class="st" style="left:307.5px">0</div>
<svg style="left:320px;top:653px" width="16" height="15" viewBox="0 0 16 15"><path d="M8 1 L15 14 H1 Z" stroke="#fff" stroke-width="1.4" fill="none" stroke-linejoin="round"/><path d="M8 5.5 V9.8" stroke="#fff" stroke-width="1.5"/><circle cx="8" cy="11.8" r="0.9" fill="#fff"/></svg>
<div class="st" style="left:338px">0</div>
<svg style="left:369.5px;top:657px" width="9" height="13" viewBox="0 0 9 13"><path d="M5.2 0 L0.2 6.4 H3.6 L3 11.9 L7.6 5.4 H4.3 Z" fill="#f28b3a"/></svg>
<div class="st" style="left:386px;letter-spacing:-0.75px">BLACKBOX Chat</div>
<div class="st" style="left:500.5px">Add Logs</div>
<svg style="left:576.5px;top:657px" width="15" height="13" viewBox="0 0 15 13"><path fill="#fcc21b" d="M0.5 8 C0.5 5 2.3 3.4 4.6 2.6 L6.2 0.6 C7 -0.1 8.2 0.4 8 1.5 L7.6 3.3 H13 C13.9 3.3 14.5 3.8 14.5 4.5 C14.5 5.2 13.9 5.7 13 5.7 H9.8 C10.1 6.5 10 7.3 9.6 7.8 C10 8.5 9.9 9.5 9.3 10 C9.4 11.4 8.6 12.6 7 12.6 H4.8 C2.2 12.6 0.5 10.8 0.5 8 Z"/></svg>
<div class="st" style="left:596.5px">CyberCoder</div>
<div class="st" style="left:685px">Improve Code</div>
<div class="st" style="left:787.5px">Attach</div>
<div class="st" style="left:842.5px">Flutter clean</div>
<svg style="left:923px;top:653.5px" width="11" height="14" viewBox="0 0 11 14"><path d="M0.5 2.5 H10.5 M3.5 2.5 V1 H7.5 V2.5" stroke="#fff" stroke-width="1.2" fill="none"/><path d="M1.5 3.5 H9.5 L9 13 H2 Z" fill="#fff"/><path d="M4 5 V11.5 M5.5 5 V11.5 M7 5 V11.5" stroke="#007acc" stroke-width="0.7"/></svg>
<div class="st" style="left:954.5px">Pub get</div>
<div class="st" style="left:1017.5px">Build apk</div>
<svg style="left:1078.5px;top:654px" width="15" height="12" viewBox="0 0 15 12"><path d="M0.5 8 H3.5 L5.5 2 L8 11 L10 5 L11.5 8 H14.5" stroke="#fff" stroke-width="1.6" fill="none" stroke-linejoin="round"/></svg>
<svg style="left:1112px;top:653.5px" width="15" height="14" viewBox="0 0 15 14"><path d="M1 7 L7.5 1 L14 7 M1 13 L7.5 7 L14 13" stroke="#fff" stroke-width="1.5" fill="none"/></svg>
<div class="st" style="left:1131.5px;letter-spacing:-0.25px">Build Runner</div>
<svg style="left:1211.5px;top:653.5px" width="15" height="14" viewBox="0 0 15 14"><path d="M1 7 L7.5 1 L14 7 M1 13 L7.5 7 L14 13" stroke="#fff" stroke-width="1.5" fill="none"/></svg>
<div class="st" style="left:1244.5px">Open</div>
<div id="taskbar" class="a"></div>
</body></html>
